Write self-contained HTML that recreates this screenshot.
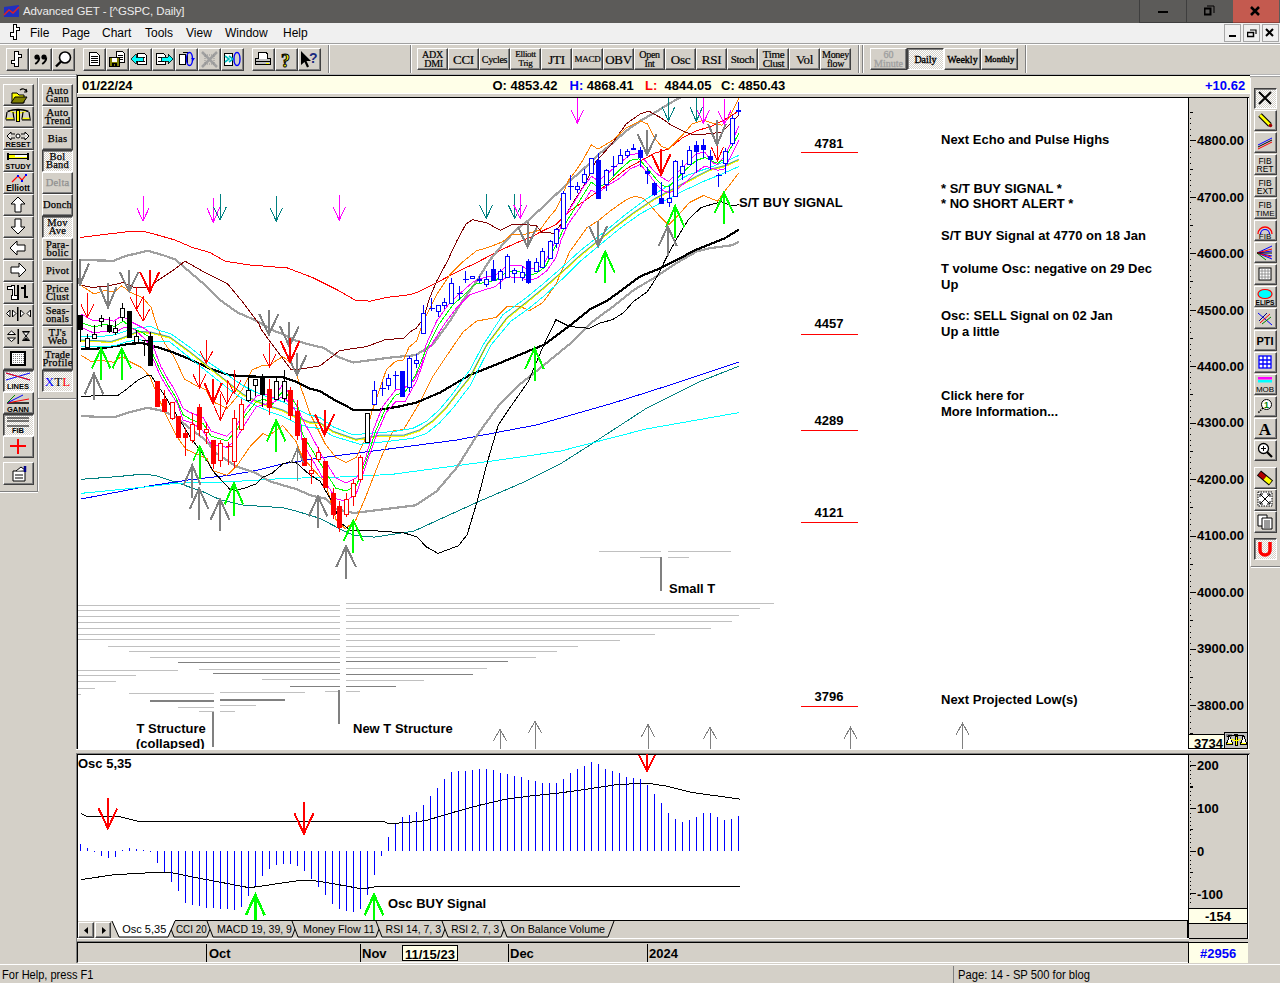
<!DOCTYPE html><html><head><meta charset="utf-8"><style>
*{margin:0;padding:0;box-sizing:border-box}
html,body{width:1280px;height:983px;overflow:hidden;background:#d4d0c8;font-family:"Liberation Sans",sans-serif;position:relative}
.a{position:absolute}
.btn{position:absolute;background:#d4d0c8;border-top:1px solid #fff;border-left:1px solid #fff;border-right:1px solid #404040;border-bottom:1px solid #404040;box-shadow:inset -1px -1px 0 #808080;overflow:hidden}
.pressed{background-color:#e8e6e2;background-image:repeating-conic-gradient(#ffffff 0 25%,#d4d0c8 0 50%);background-size:2px 2px;border-top:1px solid #404040;border-left:1px solid #404040;border-right:1px solid #fff;border-bottom:1px solid #fff;box-shadow:inset 1px 1px 0 #808080}
.tb{font-family:"Liberation Serif",serif;font-size:10px;line-height:9px;text-align:center;color:#000;width:100%;height:100%;display:flex;align-items:center;justify-content:center;letter-spacing:-0.3px}
svg{position:absolute;left:0;top:0}
</style></head><body><div class="a" style="left:0px;top:0px;width:1280px;height:23px;background:#5c5b59;"></div>
<svg width="20" height="20" style="left:2px;top:2px" viewBox="0 0 20 20"><polygon points="2,5 17,3 17,15 2,15" fill="#2030c0"/><polyline points="2,13 7,8 11,11 17,5" stroke="#e02020" stroke-width="1.5" fill="none"/></svg>
<div class="a" style="left:23px;top:6px;font-size:11.5px;color:#ececec;font-weight:normal;font-family:'Liberation Sans',sans-serif;white-space:nowrap;line-height:1;letter-spacing:-0.1px">Advanced GET - [^GSPC, Daily]</div>
<div class="a" style="left:1139px;top:0px;width:1px;height:22px;background:#3e3e3e;"></div>
<div class="a" style="left:1186px;top:0px;width:1px;height:22px;background:#3e3e3e;"></div>
<div class="a" style="left:1139px;top:22px;width:94px;height:1px;background:#3e3e3e;"></div>
<div class="a" style="left:1233px;top:0px;width:46px;height:22px;background:#c45a4f;"></div>
<div class="a" style="left:1233px;top:22px;width:46px;height:1px;background:#8e4039;"></div>
<div class="a" style="left:1158px;top:11px;width:10px;height:2px;background:#000;"></div>
<svg width="12" height="12" style="left:1204px;top:5px"><rect x="0.5" y="3.5" width="6" height="6" fill="none" stroke="#000" stroke-width="2"/><polyline points="3,1 10,1 10,8" fill="none" stroke="#000" stroke-width="1"/></svg>
<svg width="12" height="12" style="left:1250px;top:6px"><path d="M1,1 L9,9 M9,1 L1,9" stroke="#000" stroke-width="2.5"/></svg>
<div class="a" style="left:0px;top:23px;width:1280px;height:20px;background:#f0f0f0;"></div>
<svg width="14" height="18" style="left:9px;top:24px" shape-rendering="crispEdges"><path d="M4.5,0.5 h3 v3 h3 v3 h-3 v9 h-3 v-3 h-3 v-4 h3 z" fill="#fff" stroke="#000" stroke-width="1"/></svg>
<div class="a" style="left:30px;top:27px;font-size:12px;color:#000;font-weight:normal;font-family:'Liberation Sans',sans-serif;white-space:nowrap;line-height:1;">File</div>
<div class="a" style="left:62px;top:27px;font-size:12px;color:#000;font-weight:normal;font-family:'Liberation Sans',sans-serif;white-space:nowrap;line-height:1;">Page</div>
<div class="a" style="left:102px;top:27px;font-size:12px;color:#000;font-weight:normal;font-family:'Liberation Sans',sans-serif;white-space:nowrap;line-height:1;">Chart</div>
<div class="a" style="left:145px;top:27px;font-size:12px;color:#000;font-weight:normal;font-family:'Liberation Sans',sans-serif;white-space:nowrap;line-height:1;">Tools</div>
<div class="a" style="left:186px;top:27px;font-size:12px;color:#000;font-weight:normal;font-family:'Liberation Sans',sans-serif;white-space:nowrap;line-height:1;">View</div>
<div class="a" style="left:225px;top:27px;font-size:12px;color:#000;font-weight:normal;font-family:'Liberation Sans',sans-serif;white-space:nowrap;line-height:1;">Window</div>
<div class="a" style="left:283px;top:27px;font-size:12px;color:#000;font-weight:normal;font-family:'Liberation Sans',sans-serif;white-space:nowrap;line-height:1;">Help</div>
<div class="a" style="left:1224px;top:24px;width:17px;height:18px;background:#f0f0f0;border:1px solid #a8a8a8"></div>
<div class="a" style="left:1243px;top:24px;width:17px;height:18px;background:#f0f0f0;border:1px solid #a8a8a8"></div>
<div class="a" style="left:1262px;top:24px;width:17px;height:18px;background:#f0f0f0;border:1px solid #a8a8a8"></div>
<div class="a" style="left:1229px;top:35px;width:7px;height:2px;background:#000;"></div>
<svg width="10" height="10" style="left:1247px;top:28px"><rect x="0.5" y="4.5" width="6" height="4" fill="none" stroke="#000" stroke-width="1.5"/><polyline points="3,2 9,2 9,6" fill="none" stroke="#000" stroke-width="1.2"/></svg>
<svg width="10" height="10" style="left:1265px;top:28px"><path d="M1,1 L8,8 M8,1 L1,8" stroke="#000" stroke-width="2"/></svg>
<div class="a" style="left:0px;top:43px;width:1280px;height:1px;background:#a0a0a0;"></div>
<div class="a" style="left:0px;top:44px;width:1280px;height:1px;background:#ffffff;"></div>
<div class="a" style="left:328px;top:45px;width:1px;height:28px;background:#808080;"></div>
<div class="a" style="left:329px;top:45px;width:1px;height:28px;background:#ffffff;"></div>
<div class="a" style="left:410px;top:45px;width:1px;height:28px;background:#808080;"></div>
<div class="a" style="left:411px;top:45px;width:1px;height:28px;background:#ffffff;"></div>
<div class="a" style="left:858px;top:45px;width:1px;height:28px;background:#808080;"></div>
<div class="a" style="left:859px;top:45px;width:1px;height:28px;background:#ffffff;"></div>
<div class="a" style="left:862px;top:45px;width:1px;height:28px;background:#808080;"></div>
<div class="a" style="left:863px;top:45px;width:1px;height:28px;background:#ffffff;"></div>
<div class="a" style="left:1025px;top:45px;width:1px;height:28px;background:#808080;"></div>
<div class="a" style="left:1026px;top:45px;width:1px;height:28px;background:#ffffff;"></div>
<div class="btn" style="left:6px;top:48px;width:23px;height:23px;"><div style="position:absolute;left:-1px;top:-1px"><svg width="23" height="23" shape-rendering="crispEdges"><path d="M8.5,3.5 h4 v3 h3 v3 h-3 v9 h-4 v-3 h-3 v-3 h3 z" fill="#fff" stroke="#000" stroke-width="1.5"/></svg></div></div>
<div class="btn" style="left:29px;top:48px;width:23px;height:23px;"><div style="position:absolute;left:-1px;top:-1px"><svg width="23" height="23"><circle cx="8" cy="9" r="2.6" fill="#000"/><circle cx="15" cy="9" r="2.6" fill="#000"/><path d="M10.2,9.5 q0,4 -4,6.5 M17.2,9.5 q0,4 -4,6.5" stroke="#000" stroke-width="2" fill="none"/></svg></div></div>
<div class="btn" style="left:52px;top:48px;width:23px;height:23px;"><div style="position:absolute;left:-1px;top:-1px"><svg width="23" height="23"><circle cx="13" cy="9.5" r="5.5" fill="#fff" stroke="#000" stroke-width="1.6"/><path d="M9,13.5 L4,18.5" stroke="#000" stroke-width="2.4"/></svg></div></div>
<div class="btn" style="left:83px;top:48px;width:23px;height:23px;"><div style="position:absolute;left:-1px;top:-1px"><svg width="23" height="23" shape-rendering="crispEdges"><path d="M6.5,4.5 h7 l3,3 v10 h-10 z" fill="#fff" stroke="#000"/><rect x="8" y="8" width="7" height="1" fill="#000"/><rect x="8" y="10" width="7" height="1" fill="#000"/><rect x="8" y="12" width="7" height="1" fill="#000"/><rect x="8" y="14" width="7" height="1" fill="#000"/></svg></div></div>
<div class="btn" style="left:106px;top:48px;width:23px;height:23px;"><div style="position:absolute;left:-1px;top:-1px"><svg width="23" height="23" shape-rendering="crispEdges"><path d="M10.5,3.5 h6 l2,2 v9 h-8 z" fill="#fff" stroke="#000"/><rect x="12" y="7" width="5" height="1" fill="#000"/><rect x="12" y="9" width="5" height="1" fill="#000"/><rect x="12" y="11" width="5" height="1" fill="#000"/><rect x="3.5" y="9.5" width="10" height="9" fill="#808000" stroke="#000"/><rect x="6" y="10" width="5" height="4" fill="#fff"/><rect x="6" y="15" width="5" height="3" fill="#000"/><rect x="8" y="16" width="1" height="2" fill="#808000"/></svg></div></div>
<div class="btn" style="left:129px;top:48px;width:23px;height:23px;"><div style="position:absolute;left:-1px;top:-1px"><svg width="23" height="23" shape-rendering="crispEdges"><path d="M8.5,5.5 h7 l2,2 v9 h-9 z" fill="#fff" stroke="#000"/><rect x="10" y="9" width="6" height="1" fill="#000"/><rect x="10" y="13" width="6" height="1" fill="#000"/><polygon points="2,11 7,6 7,9 14,9 14,13 7,13 7,16" fill="#00ffff" stroke="#000" stroke-width="0.8"/></svg></div></div>
<div class="btn" style="left:152px;top:48px;width:23px;height:23px;"><div style="position:absolute;left:-1px;top:-1px"><svg width="23" height="23" shape-rendering="crispEdges"><path d="M4.5,5.5 h7 l2,2 v9 h-9 z" fill="#fff" stroke="#000"/><rect x="6" y="9" width="6" height="1" fill="#000"/><rect x="6" y="13" width="6" height="1" fill="#000"/><polygon points="21,11 16,6 16,9 9,9 9,13 16,13 16,16" fill="#00ffff" stroke="#000" stroke-width="0.8"/></svg></div></div>
<div class="btn" style="left:175px;top:48px;width:23px;height:23px;"><div style="position:absolute;left:-1px;top:-1px"><svg width="23" height="23"><path d="M4.5,6.5 h6 v10 h-6 z" fill="#fff" stroke="#000" shape-rendering="crispEdges"/><path d="M7.5,4.5 h5 v10" fill="none" stroke="#000" shape-rendering="crispEdges"/><ellipse cx="14.5" cy="11" rx="3" ry="6.5" fill="none" stroke="#0000ff" stroke-width="1.4"/><polygon points="16,10 20,10 18,13" fill="#0000ff"/></svg></div></div>
<div class="btn" style="left:198px;top:48px;width:23px;height:23px;"><div style="position:absolute;left:-1px;top:-1px"><svg width="23" height="23"><path d="M4,4 L19,19 M19,4 L4,19" stroke="#a0a0a0" stroke-width="2.5"/><rect x="7" y="7" width="9" height="9" fill="none" stroke="#909090" stroke-dasharray="1,1"/></svg></div></div>
<div class="btn" style="left:221px;top:48px;width:23px;height:23px;"><div style="position:absolute;left:-1px;top:-1px"><svg width="23" height="23"><path d="M3.5,5.5 h8 v12 h-8 z" fill="#fff" stroke="#000" shape-rendering="crispEdges"/><path d="M4,8 l4,3 l-4,3 M8,8 l4,3 l-4,3" stroke="#00c0c0" stroke-width="1.6" fill="none"/><ellipse cx="16" cy="11" rx="3" ry="6.5" fill="none" stroke="#0000ff" stroke-width="1.4"/></svg></div></div>
<div class="btn" style="left:252px;top:48px;width:23px;height:23px;"><div style="position:absolute;left:-1px;top:-1px"><svg width="23" height="23" shape-rendering="crispEdges"><rect x="3.5" y="10.5" width="15" height="6" fill="#c0c0c0" stroke="#000"/><path d="M6.5,10.5 v-6 h8 l1,2 v4" fill="#fff" stroke="#000"/><rect x="4" y="13" width="14" height="1" fill="#000"/><rect x="14" y="15" width="3" height="1" fill="#ffff00"/></svg></div></div>
<div class="btn" style="left:275px;top:48px;width:23px;height:23px;"><div style="position:absolute;left:-1px;top:-1px"><svg width="23" height="23"><text x="6" y="19" font-family="Liberation Serif" font-weight="bold" font-size="18" fill="#ffff00" stroke="#000" stroke-width="1">?</text></svg></div></div>
<div class="btn" style="left:298px;top:48px;width:23px;height:23px;"><div style="position:absolute;left:-1px;top:-1px"><svg width="23" height="23"><polygon points="3,3 3,17 6.5,14 9,19.5 11,18.5 8.5,13 13,13" fill="#000"/><text x="11" y="15" font-family="Liberation Sans" font-weight="bold" font-size="14" fill="#1a2a80">?</text></svg></div></div>
<div class="btn" style="left:417px;top:48px;width:31px;height:22px;"><div class="tb" style="font-size:10px;-webkit-text-stroke:0.2px #000">ADX<br>&nbsp;DMI</div></div>
<div class="btn" style="left:448px;top:48px;width:31px;height:22px;"><div class="tb" style="font-size:13px;-webkit-text-stroke:0.2px #000">CCI</div></div>
<div class="btn" style="left:479px;top:48px;width:31px;height:22px;"><div class="tb" style="font-size:10px;-webkit-text-stroke:0.2px #000">Cycles</div></div>
<div class="btn" style="left:510px;top:48px;width:31px;height:22px;"><div class="tb" style="font-size:9px;-webkit-text-stroke:0.2px #000">Elliott<br>Trig</div></div>
<div class="btn" style="left:541px;top:48px;width:31px;height:22px;"><div class="tb" style="font-size:13px;-webkit-text-stroke:0.2px #000">JTI</div></div>
<div class="btn" style="left:572px;top:48px;width:31px;height:22px;"><div class="tb" style="font-size:9px;-webkit-text-stroke:0.2px #000">MACD</div></div>
<div class="btn" style="left:603px;top:48px;width:31px;height:22px;"><div class="tb" style="font-size:13px;-webkit-text-stroke:0.2px #000">OBV</div></div>
<div class="btn" style="left:634px;top:48px;width:31px;height:22px;"><div class="tb" style="font-size:10px;-webkit-text-stroke:0.2px #000">Open<br>Int</div></div>
<div class="btn" style="left:665px;top:48px;width:31px;height:22px;"><div class="tb" style="font-size:13px;-webkit-text-stroke:0.2px #000">Osc</div></div>
<div class="btn" style="left:696px;top:48px;width:31px;height:22px;"><div class="tb" style="font-size:13px;-webkit-text-stroke:0.2px #000">RSI</div></div>
<div class="btn" style="left:727px;top:48px;width:31px;height:22px;"><div class="tb" style="font-size:11px;-webkit-text-stroke:0.2px #000">Stoch</div></div>
<div class="btn" style="left:758px;top:48px;width:31px;height:22px;"><div class="tb" style="font-size:11px;-webkit-text-stroke:0.2px #000">Time<br>Clust</div></div>
<div class="btn" style="left:789px;top:48px;width:31px;height:22px;"><div class="tb" style="font-size:13px;-webkit-text-stroke:0.2px #000">Vol</div></div>
<div class="btn" style="left:820px;top:48px;width:31px;height:22px;"><div class="tb" style="font-size:10px;-webkit-text-stroke:0.2px #000">Money<br>flow</div></div>
<div class="btn" style="left:870px;top:48px;width:37px;height:22px;"><div class="tb" style="font-size:10px;color:#a0a0a0;font-weight:normal;-webkit-text-stroke:0.35px #a0a0a0;letter-spacing:0">60<br>Minute</div></div>
<div class="btn pressed" style="left:907px;top:48px;width:37px;height:22px;"><div class="tb" style="font-size:10px;color:#000;font-weight:normal;-webkit-text-stroke:0.35px #000;letter-spacing:0">Daily</div></div>
<div class="btn" style="left:944px;top:48px;width:37px;height:22px;"><div class="tb" style="font-size:10px;color:#000;font-weight:normal;-webkit-text-stroke:0.35px #000;letter-spacing:0">Weekly</div></div>
<div class="btn" style="left:981px;top:48px;width:37px;height:22px;"><div class="tb" style="font-size:8.6px;color:#000;font-weight:normal;-webkit-text-stroke:0.35px #000;letter-spacing:0">Monthly</div></div>
<div class="a" style="left:0px;top:74px;width:1280px;height:1px;background:#b4b4b4;"></div>
<div class="a" style="left:0px;top:75px;width:1280px;height:1px;background:#ffffff;"></div>
<div class="a" style="left:0px;top:76px;width:1280px;height:1px;background:#a0a0a0;"></div>
<div class="a" style="left:0px;top:77px;width:77px;height:1px;background:#ffffff;"></div>
<div class="a" style="left:37px;top:78px;width:1px;height:413px;background:#808080;"></div>
<div class="a" style="left:38px;top:78px;width:1px;height:413px;background:#ffffff;"></div>
<div class="a" style="left:0px;top:491px;width:38px;height:1px;background:#808080;"></div>
<div class="a" style="left:0px;top:492px;width:38px;height:1px;background:#ffffff;"></div>
<div class="a" style="left:38px;top:398px;width:39px;height:1px;background:#808080;"></div>
<div class="a" style="left:38px;top:399px;width:39px;height:1px;background:#ffffff;"></div>
<div class="a" style="left:76px;top:78px;width:1px;height:320px;background:#808080;"></div>
<div class="btn" style="left:3px;top:84px;width:31px;height:22px;"><div style="position:absolute;left:-1px;top:-1px"><svg width="30" height="21"><path d="M9,9 h5 l2,2 h5 v8 h-12 z" fill="#ffff00" stroke="#000" stroke-width="1"/><path d="M8,19 l4,-6 h12 l-4,6 z" fill="#808000" stroke="#000" stroke-width="1"/><path d="M17,6 q4,-3 7,2 l-1,-3 m1,3 l-3,0" fill="none" stroke="#000" stroke-width="1.2"/></svg></div></div>
<div class="btn" style="left:3px;top:106px;width:31px;height:22px;"><div style="position:absolute;left:-1px;top:-1px"><svg width="30" height="21"><path d="M4.5,5.5 q10.5,-4 21,0" fill="none" stroke="#000" stroke-width="1.6"/><path d="M7.5,5.5 q7,3 15,0" fill="none" stroke="#ffff00" stroke-width="1.2"/><rect x="13" y="3" width="4" height="13" fill="#000"/><rect x="14" y="5" width="2" height="10" fill="#ffff00"/><path d="M4,6 l-1,7 h8 l-1,-7" fill="none" stroke="#000" stroke-width="1.2"/><path d="M20,6 l-1,7 h8 l-1,-7" fill="none" stroke="#000" stroke-width="1.2"/><path d="M3.5,12.5 h7 M19.5,12.5 h7" stroke="#ffff00" stroke-width="1.6"/><path d="M3,14 h9 M19,14 h9" stroke="#000" stroke-width="1"/></svg></div></div>
<div class="btn" style="left:3px;top:128px;width:31px;height:22px;"><div style="position:absolute;left:-1px;top:-1px"><svg width="30" height="21"><path d="M4,8 l4,-4 v2 h4 M4,8 l4,4 v-2 h4 M26,8 l-4,-4 v2 h-4 M26,8 l-4,4 v-2 h-4" fill="#fff" stroke="#000" stroke-width="1"/><circle cx="15" cy="8" r="2" fill="#fff" stroke="#000"/><text x="15" y="19" text-anchor="middle" font-family="Liberation Sans" font-weight="bold" font-size="7.5" fill="#000">RESET</text></svg></div></div>
<div class="btn" style="left:3px;top:150px;width:31px;height:22px;"><div style="position:absolute;left:-1px;top:-1px"><svg width="30" height="21" shape-rendering="crispEdges"><rect x="5.5" y="4.5" width="19" height="4" fill="#ffff00" stroke="#000"/><rect x="12" y="5" width="12" height="2" fill="#fff"/><rect x="4" y="3" width="2" height="7" fill="#000"/><rect x="24" y="3" width="2" height="7" fill="#000"/><text x="15" y="19" text-anchor="middle" font-family="Liberation Sans" font-weight="bold" font-size="7.5" fill="#000">STUDY</text></svg></div></div>
<div class="btn" style="left:3px;top:172px;width:31px;height:22px;"><div style="position:absolute;left:-1px;top:-1px"><svg width="30" height="21"><polyline points="9,10 15,4 19,8 23,3" fill="none" stroke="#f00" stroke-width="1.2"/><rect x="14" y="3" width="2" height="2" fill="#00f"/><rect x="18" y="8" width="2" height="2" fill="#00f"/><rect x="22" y="2" width="2" height="2" fill="#00f"/><text x="15" y="19" text-anchor="middle" font-family="Liberation Sans" font-weight="bold" font-size="8.5" fill="#000">Elliott</text></svg></div></div>
<div class="btn" style="left:3px;top:194px;width:31px;height:22px;"><div style="position:absolute;left:-1px;top:-1px"><svg width="30" height="21"><polygon points="15,3 22,10 18,10 18,18 12,18 12,10 8,10" fill="#fff" stroke="#000"/></svg></div></div>
<div class="btn" style="left:3px;top:216px;width:31px;height:22px;"><div style="position:absolute;left:-1px;top:-1px"><svg width="30" height="21"><polygon points="15,18 22,11 18,11 18,3 12,3 12,11 8,11" fill="#fff" stroke="#000"/></svg></div></div>
<div class="btn" style="left:3px;top:238px;width:31px;height:22px;"><div style="position:absolute;left:-1px;top:-1px"><svg width="30" height="21"><polygon points="7,10 14,3 14,7 22,7 22,13 14,13 14,17" fill="#fff" stroke="#000"/></svg></div></div>
<div class="btn" style="left:3px;top:260px;width:31px;height:22px;"><div style="position:absolute;left:-1px;top:-1px"><svg width="30" height="21"><polygon points="23,10 16,3 16,7 8,7 8,13 16,13 16,17" fill="#fff" stroke="#000"/></svg></div></div>
<div class="btn" style="left:3px;top:282px;width:31px;height:22px;"><div style="position:absolute;left:-1px;top:-1px"><svg width="30" height="21" shape-rendering="crispEdges"><path d="M4.5,4.5 h4 v-1 h3 v10 h3 v4 h-6 v-4 h1 v-6 h-5 z" fill="#fff" stroke="#000" stroke-width="1.5"/><rect x="14" y="3" width="1.5" height="15" fill="#000"/><rect x="18" y="5" width="4" height="1.5" fill="#000"/><rect x="21" y="3" width="1.5" height="13" fill="#000"/><rect x="21" y="14" width="4" height="1.5" fill="#000"/></svg></div></div>
<div class="btn" style="left:3px;top:304px;width:31px;height:22px;"><div style="position:absolute;left:-1px;top:-1px"><svg width="30" height="21"><path d="M3.5,9.5 l3.5,-3.5 v7 z M9.5,6 v7 l3.5,-3.5 z M17.5,6 v7 l3.5,-3.5 z M27.5,6 v7 l-3.5,-3.5 z" fill="#fff" stroke="#000" stroke-width="1"/><rect x="14" y="3" width="1.5" height="14" fill="#000"/></svg></div></div>
<div class="btn" style="left:3px;top:326px;width:31px;height:22px;"><div style="position:absolute;left:-1px;top:-1px"><svg width="30" height="21"><path d="M4.5,8.5 l4,-3.5 l4,3.5 z M4.5,12 l4,3.5 l4,-3.5 z" fill="#fff" stroke="#000" stroke-width="1"/><rect x="14.5" y="3" width="1.5" height="15" fill="#000"/><path d="M19.5,5.5 h7 l-3.5,4.5 l3.5,4.5 h-7 l3.5,-4.5 z" fill="#fff" stroke="#000" stroke-width="1"/><path d="M20.5,14 h5 l-2.5,-2.5 z" fill="#000"/><path d="M20.5,6 h5" stroke="#000" stroke-width="1.2"/></svg></div></div>
<div class="btn" style="left:3px;top:348px;width:31px;height:22px;"><div style="position:absolute;left:-1px;top:-1px"><svg width="30" height="21" shape-rendering="crispEdges"><defs><pattern id="dots" width="2" height="2" patternUnits="userSpaceOnUse"><rect width="2" height="2" fill="#fff"/><rect width="1" height="1" fill="#808080"/></pattern></defs><rect x="8" y="4" width="14" height="13" fill="url(#dots)" stroke="#000" stroke-width="2"/></svg></div></div>
<div class="btn pressed" style="left:3px;top:370px;width:31px;height:22px;"><div style="position:absolute;left:-1px;top:-1px"><svg width="30" height="21"><path d="M3,3 L27,10 M3,10 L27,3" stroke="#00f" stroke-width="1"/><path d="M3,3 L27,10" stroke="#f00" stroke-width="1"/><text x="15" y="19" text-anchor="middle" font-family="Liberation Sans" font-weight="bold" font-size="7.5" fill="#000">LINES</text></svg></div></div>
<div class="btn" style="left:3px;top:392px;width:31px;height:22px;"><div style="position:absolute;left:-1px;top:-1px"><svg width="30" height="21"><path d="M4,11 h22" stroke="#000" stroke-width="1.5"/><path d="M4,11 L26,7" stroke="#f00"/><path d="M4,11 L20,3" stroke="#00f"/><path d="M4,11 L12,3" stroke="#080"/><text x="15" y="20" text-anchor="middle" font-family="Liberation Sans" font-weight="bold" font-size="7.5" fill="#000">GANN</text></svg></div></div>
<div class="btn pressed" style="left:3px;top:414px;width:31px;height:22px;"><div style="position:absolute;left:-1px;top:-1px"><svg width="30" height="21"><path d="M4,4 h22 M4,7 h22 M4,12 h22" stroke="#000" stroke-width="1.2"/><text x="15" y="19" text-anchor="middle" font-family="Liberation Sans" font-weight="bold" font-size="7.5" fill="#000">FIB</text></svg></div></div>
<div class="btn" style="left:3px;top:436px;width:31px;height:22px;"><div style="position:absolute;left:-1px;top:-1px"><svg width="30" height="21"><path d="M15,3 v15 M7,10 h16" stroke="#f00" stroke-width="2"/></svg></div></div>
<div class="btn" style="left:3px;top:462px;width:31px;height:23px;"><div style="position:absolute;left:-1px;top:0px"><svg width="30" height="21"><path d="M10,8 h12 v10 h-12 z" fill="#fff" stroke="#000"/><path d="M12,12 h8 M12,15 h8" stroke="#000"/><path d="M13,8 l5,-4 l4,3" fill="#fff" stroke="#000"/><path d="M22,3 v6" stroke="#00008b" stroke-width="2.5"/></svg></div></div>
<div class="btn" style="left:42px;top:84px;width:31px;height:22px;"><div class="tb" style="font-size:10.5px;font-weight:normal;color:#000;line-height:8px;letter-spacing:0.2px;-webkit-text-stroke:0.25px #000">Auto<br>Gann</div></div>
<div class="btn" style="left:42px;top:106px;width:31px;height:22px;"><div class="tb" style="font-size:10.5px;font-weight:normal;color:#000;line-height:8px;letter-spacing:0.2px;-webkit-text-stroke:0.25px #000">Auto<br>Trend</div></div>
<div class="btn" style="left:42px;top:128px;width:31px;height:22px;"><div class="tb" style="font-size:10.5px;font-weight:normal;color:#000;line-height:8px;letter-spacing:0.2px;-webkit-text-stroke:0.25px #000">Bias</div></div>
<div class="btn pressed" style="left:42px;top:150px;width:31px;height:22px;"><div class="tb" style="font-size:10.5px;font-weight:normal;color:#000;line-height:8px;letter-spacing:0.2px;-webkit-text-stroke:0.25px #000">Bol<br>Band</div></div>
<div class="btn" style="left:42px;top:172px;width:31px;height:22px;"><div class="tb" style="font-size:10.5px;font-weight:normal;color:#909090;line-height:8px;letter-spacing:0.2px;-webkit-text-stroke:0.25px #909090">Delta</div></div>
<div class="btn" style="left:42px;top:194px;width:31px;height:22px;"><div class="tb" style="font-size:10.5px;font-weight:normal;color:#000;line-height:8px;letter-spacing:0.2px;-webkit-text-stroke:0.25px #000">Donch</div></div>
<div class="btn pressed" style="left:42px;top:216px;width:31px;height:22px;"><div class="tb" style="font-size:10.5px;font-weight:normal;color:#000;line-height:8px;letter-spacing:0.2px;-webkit-text-stroke:0.25px #000">Mov<br>Ave</div></div>
<div class="btn" style="left:42px;top:238px;width:31px;height:22px;"><div class="tb" style="font-size:10.5px;font-weight:normal;color:#000;line-height:8px;letter-spacing:0.2px;-webkit-text-stroke:0.25px #000">Para-<br>bolic</div></div>
<div class="btn" style="left:42px;top:260px;width:31px;height:22px;"><div class="tb" style="font-size:10.5px;font-weight:normal;color:#000;line-height:8px;letter-spacing:0.2px;-webkit-text-stroke:0.25px #000">Pivot</div></div>
<div class="btn" style="left:42px;top:282px;width:31px;height:22px;"><div class="tb" style="font-size:10.5px;font-weight:normal;color:#000;line-height:8px;letter-spacing:0.2px;-webkit-text-stroke:0.25px #000">Price<br>Clust</div></div>
<div class="btn" style="left:42px;top:304px;width:31px;height:22px;"><div class="tb" style="font-size:10.5px;font-weight:normal;color:#000;line-height:8px;letter-spacing:0.2px;-webkit-text-stroke:0.25px #000">Seas-<br>onals</div></div>
<div class="btn" style="left:42px;top:326px;width:31px;height:22px;"><div class="tb" style="font-size:10.5px;font-weight:normal;color:#000;line-height:8px;letter-spacing:0.2px;-webkit-text-stroke:0.25px #000">TJ's<br>Web</div></div>
<div class="btn" style="left:42px;top:348px;width:31px;height:22px;"><div class="tb" style="font-size:10.5px;font-weight:normal;color:#000;line-height:8px;letter-spacing:0.2px;-webkit-text-stroke:0.25px #000">Trade<br>Profile</div></div>
<div class="btn pressed" style="left:42px;top:370px;width:31px;height:22px;"><div class="tb" style="font-size:13px;letter-spacing:0"><span style="color:#00f">X</span><span>T</span><span style="color:#f00">L</span></div></div>
<div class="a" style="left:77px;top:75px;width:1173px;height:18px;background:#ffffe8;border-top:1px solid #000;border-left:1px solid #000"></div>
<div class="a" style="left:77px;top:93px;width:1173px;height:1px;background:#ffffff;"></div>
<div class="a" style="left:82px;top:79px;font-size:13px;color:#000;font-weight:bold;font-family:'Liberation Sans',sans-serif;white-space:nowrap;line-height:1;">01/22/24</div>
<div class="a" style="left:492.5px;top:79px;font-size:13px;color:#000;font-weight:bold;font-family:'Liberation Sans',sans-serif;white-space:nowrap;line-height:1;">O: 4853.42</div>
<div class="a" style="left:569.5px;top:79px;font-size:13px;color:#000;font-weight:bold;font-family:'Liberation Sans',sans-serif;white-space:nowrap;line-height:1;"><span style="color:#00f">H:</span> 4868.41</div>
<div class="a" style="left:645px;top:79px;font-size:13px;color:#000;font-weight:bold;font-family:'Liberation Sans',sans-serif;white-space:nowrap;line-height:1;"><span style="color:#f00">L:</span>&nbsp; 4844.05</div>
<div class="a" style="left:721px;top:79px;font-size:13px;color:#000;font-weight:bold;font-family:'Liberation Sans',sans-serif;white-space:nowrap;line-height:1;">C: 4850.43</div>
<div class="a" style="left:1205px;top:79px;font-size:13px;color:#0000ff;font-weight:bold;font-family:'Liberation Sans',sans-serif;white-space:nowrap;line-height:1;">+10.62</div>
<div class="a" style="left:77px;top:97px;width:1172px;height:653px;background:#ffffff;border-top:1px solid #000;border-left:1px solid #000"></div>
<div class="a" style="left:1188px;top:98px;width:60px;height:651px;background:#d4d0c8;border-left:1px solid #000;border-right:1px solid #000"></div>
<div class="a" style="left:77px;top:749px;width:1173px;height:1px;background:#ffffff;"></div>
<div class="a" style="left:77px;top:750px;width:1173px;height:4px;background:#d4d0c8;"></div>
<div class="a" style="left:76px;top:753px;width:1174px;height:1px;background:#808080;"></div>
<div class="a" style="left:77px;top:754px;width:1172px;height:185px;background:#ffffff;border-top:1px solid #000;border-left:1px solid #000"></div>
<div class="a" style="left:1188px;top:755px;width:60px;height:153px;background:#d4d0c8;border-left:1px solid #000;border-right:1px solid #000"></div>
<div class="a" style="left:1188px;top:908px;width:60px;height:16px;background:#ffffe8;border:1px solid #000"></div>
<div class="a" style="left:1188px;top:924px;width:60px;height:15px;background:#d4d0c8;border-left:1px solid #000;border-right:1px solid #000;border-bottom:1px solid #000"></div>
<div class="a" style="left:78px;top:921px;width:1110px;height:17px;background:#d4d0c8;border-right:1px solid #000"></div>
<div class="a" style="left:175px;top:920px;width:1013px;height:1px;background:#000000;"></div>
<div class="a" style="left:77px;top:938px;width:1112px;height:1px;background:#ffffff;"></div>
<div class="btn" style="left:78px;top:922px;width:16px;height:16px;"><svg width="14" height="14" style="left:0;top:0"><polygon points="9,4 9,11 5,7.5" fill="#000"/></svg></div>
<div class="btn" style="left:95px;top:922px;width:16px;height:16px;"><svg width="14" height="14" style="left:0;top:0"><polygon points="6,4 6,11 10,7.5" fill="#000"/></svg></div>
<svg width="1280" height="983" style="left:0;top:0"><polygon points="168,921 213,921 207,937 174,937" fill="#d4d0c8"/><polyline points="168,921 174,937 207,937 213,921" fill="none" stroke="#000" stroke-width="1"/><text x="176" y="933" font-family="Liberation Sans" font-size="11.5" fill="#000" textLength="30.6" lengthAdjust="spacingAndGlyphs">CCI 20</text><polygon points="207,921 298,921 292,937 213,937" fill="#d4d0c8"/><polyline points="207,921 213,937 292,937 298,921" fill="none" stroke="#000" stroke-width="1"/><text x="217" y="933" font-family="Liberation Sans" font-size="11.5" fill="#000" textLength="75" lengthAdjust="spacingAndGlyphs">MACD 19, 39, 9</text><polygon points="292,921 382,921 376,937 298,937" fill="#d4d0c8"/><polyline points="292,921 298,937 376,937 382,921" fill="none" stroke="#000" stroke-width="1"/><text x="303" y="933" font-family="Liberation Sans" font-size="11.5" fill="#000" textLength="71.7" lengthAdjust="spacingAndGlyphs">Money Flow 11</text><polygon points="376,921 448,921 442,937 382,937" fill="#d4d0c8"/><polyline points="376,921 382,937 442,937 448,921" fill="none" stroke="#000" stroke-width="1"/><text x="385.6" y="933" font-family="Liberation Sans" font-size="11.5" fill="#000" textLength="55.4" lengthAdjust="spacingAndGlyphs">RSI 14, 7, 3</text><polygon points="442,921 507,921 501,937 448,937" fill="#d4d0c8"/><polyline points="442,921 448,937 501,937 507,921" fill="none" stroke="#000" stroke-width="1"/><text x="451.2" y="933" font-family="Liberation Sans" font-size="11.5" fill="#000" textLength="48" lengthAdjust="spacingAndGlyphs">RSI 2, 7, 3</text><polygon points="501,921 614,921 608,937 507,937" fill="#d4d0c8"/><polyline points="501,921 507,937 608,937 614,921" fill="none" stroke="#000" stroke-width="1"/><text x="510.5" y="933" font-family="Liberation Sans" font-size="11.5" fill="#000" textLength="94.5" lengthAdjust="spacingAndGlyphs">On Balance Volume</text><polygon points="112,920 175,920 168,937 119,937" fill="#fff"/><polyline points="112,921 119,937 168,937 175,921" fill="none" stroke="#000" stroke-width="1"/><text x="122.25" y="933" font-family="Liberation Sans" font-size="11.5" fill="#000" textLength="44" lengthAdjust="spacingAndGlyphs">Osc 5,35</text></svg>
<div class="a" style="left:76px;top:941px;width:1113px;height:1px;background:#808080;"></div>
<div class="a" style="left:77px;top:942px;width:1112px;height:21px;background:#d4d0c8;border-top:1px solid #000;border-left:1px solid #000;border-bottom:1px solid #fff"></div>
<div class="a" style="left:1188px;top:942px;width:60px;height:21px;background:#ffffe8;border-top:1px solid #000;border-left:1px solid #000"></div>
<div class="a" style="left:1200px;top:947px;font-size:13px;color:#0000ff;font-weight:bold;font-family:'Liberation Sans',sans-serif;white-space:nowrap;line-height:1;">#2956</div>
<div class="a" style="left:206px;top:944px;width:1px;height:18px;background:#000;"></div>
<div class="a" style="left:360px;top:944px;width:1px;height:18px;background:#000;"></div>
<div class="a" style="left:508px;top:944px;width:1px;height:18px;background:#000;"></div>
<div class="a" style="left:647px;top:944px;width:1px;height:18px;background:#000;"></div>
<div class="a" style="left:209px;top:947px;font-size:13px;color:#000;font-weight:bold;font-family:'Liberation Sans',sans-serif;white-space:nowrap;line-height:1;">Oct</div>
<div class="a" style="left:362px;top:947px;font-size:13px;color:#000;font-weight:bold;font-family:'Liberation Sans',sans-serif;white-space:nowrap;line-height:1;">Nov</div>
<div class="a" style="left:402px;top:945px;width:56px;height:16px;background:#ffffe8;border:1px solid #000"></div>
<div class="a" style="left:405px;top:948px;font-size:13px;color:#000;font-weight:bold;font-family:'Liberation Sans',sans-serif;white-space:nowrap;line-height:1;">11/15/23</div>
<div class="a" style="left:510px;top:947px;font-size:13px;color:#000;font-weight:bold;font-family:'Liberation Sans',sans-serif;white-space:nowrap;line-height:1;">Dec</div>
<div class="a" style="left:649px;top:947px;font-size:13px;color:#000;font-weight:bold;font-family:'Liberation Sans',sans-serif;white-space:nowrap;line-height:1;">2024</div>
<div class="a" style="left:76px;top:74px;width:1px;height:675px;background:#808080;"></div>
<div class="a" style="left:76px;top:753px;width:1px;height:210px;background:#808080;"></div>
<div class="a" style="left:76px;top:749px;width:1174px;height:1px;background:#ffffff;"></div>
<div class="a" style="left:0px;top:964px;width:1280px;height:19px;background:#d4d0c8;border-top:1px solid #fff"></div>
<div class="a" style="left:2px;top:969px;font-size:12px;color:#000;font-weight:normal;font-family:'Liberation Sans',sans-serif;white-space:nowrap;line-height:1;transform:scaleX(0.92);transform-origin:0 0">For Help, press F1</div>
<div class="a" style="left:953px;top:966px;width:327px;height:17px;background:#d4d0c8;border-left:1px solid #808080"></div>
<div class="a" style="left:958px;top:969px;font-size:12px;color:#000;font-weight:normal;font-family:'Liberation Sans',sans-serif;white-space:nowrap;line-height:1;transform:scaleX(0.935);transform-origin:0 0">Page: 14 - SP 500 for blog</div>
<svg width="1280" height="983" style="left:0;top:0" shape-rendering="crispEdges"><defs><clipPath id="cm"><rect x="78" y="98" width="1110" height="651"/></clipPath><clipPath id="co"><rect x="78" y="755" width="1110" height="165"/></clipPath></defs><g shape-rendering="crispEdges">
<rect x="1190" y="733" width="3" height="1" fill="#000"/>
<rect x="1190" y="728" width="1" height="1" fill="#000"/>
<rect x="1190" y="722" width="1" height="1" fill="#000"/>
<rect x="1190" y="716" width="1" height="1" fill="#000"/>
<rect x="1190" y="711" width="1" height="1" fill="#000"/>
<rect x="1190" y="704.5" width="6" height="1.2" fill="#000"/>
<rect x="1190" y="699" width="1" height="1" fill="#000"/>
<rect x="1190" y="694" width="1" height="1" fill="#000"/>
<rect x="1190" y="688" width="1" height="1" fill="#000"/>
<rect x="1190" y="682" width="1" height="1" fill="#000"/>
<rect x="1190" y="677" width="3" height="1" fill="#000"/>
<rect x="1190" y="671" width="1" height="1" fill="#000"/>
<rect x="1190" y="665" width="1" height="1" fill="#000"/>
<rect x="1190" y="660" width="1" height="1" fill="#000"/>
<rect x="1190" y="654" width="1" height="1" fill="#000"/>
<rect x="1190" y="648.5" width="6" height="1.2" fill="#000"/>
<rect x="1190" y="643" width="1" height="1" fill="#000"/>
<rect x="1190" y="637" width="1" height="1" fill="#000"/>
<rect x="1190" y="632" width="1" height="1" fill="#000"/>
<rect x="1190" y="626" width="1" height="1" fill="#000"/>
<rect x="1190" y="620" width="3" height="1" fill="#000"/>
<rect x="1190" y="615" width="1" height="1" fill="#000"/>
<rect x="1190" y="609" width="1" height="1" fill="#000"/>
<rect x="1190" y="603" width="1" height="1" fill="#000"/>
<rect x="1190" y="598" width="1" height="1" fill="#000"/>
<rect x="1190" y="591.5" width="6" height="1.2" fill="#000"/>
<rect x="1190" y="586" width="1" height="1" fill="#000"/>
<rect x="1190" y="581" width="1" height="1" fill="#000"/>
<rect x="1190" y="575" width="1" height="1" fill="#000"/>
<rect x="1190" y="569" width="1" height="1" fill="#000"/>
<rect x="1190" y="564" width="3" height="1" fill="#000"/>
<rect x="1190" y="558" width="1" height="1" fill="#000"/>
<rect x="1190" y="553" width="1" height="1" fill="#000"/>
<rect x="1190" y="547" width="1" height="1" fill="#000"/>
<rect x="1190" y="541" width="1" height="1" fill="#000"/>
<rect x="1190" y="535.5" width="6" height="1.2" fill="#000"/>
<rect x="1190" y="530" width="1" height="1" fill="#000"/>
<rect x="1190" y="524" width="1" height="1" fill="#000"/>
<rect x="1190" y="519" width="1" height="1" fill="#000"/>
<rect x="1190" y="513" width="1" height="1" fill="#000"/>
<rect x="1190" y="507" width="3" height="1" fill="#000"/>
<rect x="1190" y="502" width="1" height="1" fill="#000"/>
<rect x="1190" y="496" width="1" height="1" fill="#000"/>
<rect x="1190" y="490" width="1" height="1" fill="#000"/>
<rect x="1190" y="485" width="1" height="1" fill="#000"/>
<rect x="1190" y="478.5" width="6" height="1.2" fill="#000"/>
<rect x="1190" y="473" width="1" height="1" fill="#000"/>
<rect x="1190" y="468" width="1" height="1" fill="#000"/>
<rect x="1190" y="462" width="1" height="1" fill="#000"/>
<rect x="1190" y="457" width="1" height="1" fill="#000"/>
<rect x="1190" y="451" width="3" height="1" fill="#000"/>
<rect x="1190" y="445" width="1" height="1" fill="#000"/>
<rect x="1190" y="440" width="1" height="1" fill="#000"/>
<rect x="1190" y="434" width="1" height="1" fill="#000"/>
<rect x="1190" y="428" width="1" height="1" fill="#000"/>
<rect x="1190" y="422.5" width="6" height="1.2" fill="#000"/>
<rect x="1190" y="417" width="1" height="1" fill="#000"/>
<rect x="1190" y="411" width="1" height="1" fill="#000"/>
<rect x="1190" y="406" width="1" height="1" fill="#000"/>
<rect x="1190" y="400" width="1" height="1" fill="#000"/>
<rect x="1190" y="394" width="3" height="1" fill="#000"/>
<rect x="1190" y="389" width="1" height="1" fill="#000"/>
<rect x="1190" y="383" width="1" height="1" fill="#000"/>
<rect x="1190" y="377" width="1" height="1" fill="#000"/>
<rect x="1190" y="372" width="1" height="1" fill="#000"/>
<rect x="1190" y="365.5" width="6" height="1.2" fill="#000"/>
<rect x="1190" y="361" width="1" height="1" fill="#000"/>
<rect x="1190" y="355" width="1" height="1" fill="#000"/>
<rect x="1190" y="349" width="1" height="1" fill="#000"/>
<rect x="1190" y="344" width="1" height="1" fill="#000"/>
<rect x="1190" y="338" width="3" height="1" fill="#000"/>
<rect x="1190" y="332" width="1" height="1" fill="#000"/>
<rect x="1190" y="327" width="1" height="1" fill="#000"/>
<rect x="1190" y="321" width="1" height="1" fill="#000"/>
<rect x="1190" y="315" width="1" height="1" fill="#000"/>
<rect x="1190" y="309.5" width="6" height="1.2" fill="#000"/>
<rect x="1190" y="304" width="1" height="1" fill="#000"/>
<rect x="1190" y="298" width="1" height="1" fill="#000"/>
<rect x="1190" y="293" width="1" height="1" fill="#000"/>
<rect x="1190" y="287" width="1" height="1" fill="#000"/>
<rect x="1190" y="281" width="3" height="1" fill="#000"/>
<rect x="1190" y="276" width="1" height="1" fill="#000"/>
<rect x="1190" y="270" width="1" height="1" fill="#000"/>
<rect x="1190" y="265" width="1" height="1" fill="#000"/>
<rect x="1190" y="259" width="1" height="1" fill="#000"/>
<rect x="1190" y="252.5" width="6" height="1.2" fill="#000"/>
<rect x="1190" y="248" width="1" height="1" fill="#000"/>
<rect x="1190" y="242" width="1" height="1" fill="#000"/>
<rect x="1190" y="236" width="1" height="1" fill="#000"/>
<rect x="1190" y="231" width="1" height="1" fill="#000"/>
<rect x="1190" y="225" width="3" height="1" fill="#000"/>
<rect x="1190" y="219" width="1" height="1" fill="#000"/>
<rect x="1190" y="214" width="1" height="1" fill="#000"/>
<rect x="1190" y="208" width="1" height="1" fill="#000"/>
<rect x="1190" y="202" width="1" height="1" fill="#000"/>
<rect x="1190" y="196.5" width="6" height="1.2" fill="#000"/>
<rect x="1190" y="191" width="1" height="1" fill="#000"/>
<rect x="1190" y="185" width="1" height="1" fill="#000"/>
<rect x="1190" y="180" width="1" height="1" fill="#000"/>
<rect x="1190" y="174" width="1" height="1" fill="#000"/>
<rect x="1190" y="169" width="3" height="1" fill="#000"/>
<rect x="1190" y="163" width="1" height="1" fill="#000"/>
<rect x="1190" y="157" width="1" height="1" fill="#000"/>
<rect x="1190" y="152" width="1" height="1" fill="#000"/>
<rect x="1190" y="146" width="1" height="1" fill="#000"/>
<rect x="1190" y="139.5" width="6" height="1.2" fill="#000"/>
<rect x="1190" y="135" width="1" height="1" fill="#000"/>
<rect x="1190" y="129" width="1" height="1" fill="#000"/>
<rect x="1190" y="123" width="1" height="1" fill="#000"/>
<rect x="1190" y="118" width="1" height="1" fill="#000"/>
<rect x="1190" y="112" width="3" height="1" fill="#000"/>
</g>
<text x="1197" y="709.8" font-family="Liberation Sans" font-size="13" font-weight="bold" fill="#000" text-anchor="start">3800.00</text>
<text x="1197" y="653.3299999999999" font-family="Liberation Sans" font-size="13" font-weight="bold" fill="#000" text-anchor="start">3900.00</text>
<text x="1197" y="596.8599999999999" font-family="Liberation Sans" font-size="13" font-weight="bold" fill="#000" text-anchor="start">4000.00</text>
<text x="1197" y="540.3899999999999" font-family="Liberation Sans" font-size="13" font-weight="bold" fill="#000" text-anchor="start">4100.00</text>
<text x="1197" y="483.92" font-family="Liberation Sans" font-size="13" font-weight="bold" fill="#000" text-anchor="start">4200.00</text>
<text x="1197" y="427.45" font-family="Liberation Sans" font-size="13" font-weight="bold" fill="#000" text-anchor="start">4300.00</text>
<text x="1197" y="370.98" font-family="Liberation Sans" font-size="13" font-weight="bold" fill="#000" text-anchor="start">4400.00</text>
<text x="1197" y="314.51000000000005" font-family="Liberation Sans" font-size="13" font-weight="bold" fill="#000" text-anchor="start">4500.00</text>
<text x="1197" y="258.04" font-family="Liberation Sans" font-size="13" font-weight="bold" fill="#000" text-anchor="start">4600.00</text>
<text x="1197" y="201.57000000000002" font-family="Liberation Sans" font-size="13" font-weight="bold" fill="#000" text-anchor="start">4700.00</text>
<text x="1197" y="145.10000000000002" font-family="Liberation Sans" font-size="13" font-weight="bold" fill="#000" text-anchor="start">4800.00</text>
<rect x="1188.5" y="734.5" width="36" height="14" fill="#ffffe8" stroke="#000"/>
<text x="1194" y="747.6" font-family="Liberation Sans" font-size="13" font-weight="bold" fill="#000" text-anchor="start">3734</text>
<rect x="1224.5" y="732.5" width="23" height="16" fill="#c0c0c0" stroke="#000"/>
<rect x="1226" y="734" width="6" height="3" fill="#808080"/><path d="M1227,736.5 q9,-3 18,0" fill="none" stroke="#000" stroke-width="1.3"/><rect x="1234.5" y="735" width="3" height="11" fill="#000"/><rect x="1235.5" y="737" width="1" height="8" fill="#ff0"/><path d="M1229,737 l-2.5,7 h6 l-2,-7 M1243,737 l-2.5,7 h6 l-2,-7" fill="#fff" stroke="#000" stroke-width="1"/><path d="M1227,743.5 h5 M1240.5,743.5 h5" stroke="#ff0" stroke-width="1.3"/><path d="M1231,739 l5,2 l5,-2" fill="none" stroke="#ff0" stroke-width="1"/>
<rect x="1190" y="893.2" width="6" height="1.2" fill="#000"/>
<rect x="1190" y="871.9" width="3" height="1.2" fill="#000"/>
<rect x="1190" y="850.5" width="6" height="1.2" fill="#000"/>
<rect x="1190" y="829.1" width="3" height="1.2" fill="#000"/>
<rect x="1190" y="807.8" width="6" height="1.2" fill="#000"/>
<rect x="1190" y="786.4" width="3" height="1.2" fill="#000"/>
<rect x="1190" y="765.0" width="6" height="1.2" fill="#000"/>
<rect x="1190" y="902" width="1" height="1" fill="#000"/>
<rect x="1190" y="898" width="1" height="1" fill="#000"/>
<rect x="1190" y="894" width="1" height="1" fill="#000"/>
<rect x="1190" y="889" width="1" height="1" fill="#000"/>
<rect x="1190" y="885" width="1" height="1" fill="#000"/>
<rect x="1190" y="881" width="1" height="1" fill="#000"/>
<rect x="1190" y="877" width="1" height="1" fill="#000"/>
<rect x="1190" y="872" width="1" height="1" fill="#000"/>
<rect x="1190" y="868" width="1" height="1" fill="#000"/>
<rect x="1190" y="864" width="1" height="1" fill="#000"/>
<rect x="1190" y="860" width="1" height="1" fill="#000"/>
<rect x="1190" y="855" width="1" height="1" fill="#000"/>
<rect x="1190" y="851" width="1" height="1" fill="#000"/>
<rect x="1190" y="847" width="1" height="1" fill="#000"/>
<rect x="1190" y="842" width="1" height="1" fill="#000"/>
<rect x="1190" y="838" width="1" height="1" fill="#000"/>
<rect x="1190" y="834" width="1" height="1" fill="#000"/>
<rect x="1190" y="830" width="1" height="1" fill="#000"/>
<rect x="1190" y="825" width="1" height="1" fill="#000"/>
<rect x="1190" y="821" width="1" height="1" fill="#000"/>
<rect x="1190" y="817" width="1" height="1" fill="#000"/>
<rect x="1190" y="813" width="1" height="1" fill="#000"/>
<rect x="1190" y="808" width="1" height="1" fill="#000"/>
<rect x="1190" y="804" width="1" height="1" fill="#000"/>
<rect x="1190" y="800" width="1" height="1" fill="#000"/>
<rect x="1190" y="795" width="1" height="1" fill="#000"/>
<rect x="1190" y="791" width="1" height="1" fill="#000"/>
<rect x="1190" y="787" width="1" height="1" fill="#000"/>
<rect x="1190" y="783" width="1" height="1" fill="#000"/>
<rect x="1190" y="778" width="1" height="1" fill="#000"/>
<rect x="1190" y="774" width="1" height="1" fill="#000"/>
<rect x="1190" y="770" width="1" height="1" fill="#000"/>
<rect x="1190" y="766" width="1" height="1" fill="#000"/>
<rect x="1190" y="761" width="1" height="1" fill="#000"/>
<text x="1197" y="770.3" font-family="Liberation Sans" font-size="13" font-weight="bold" fill="#000" text-anchor="start">200</text>
<text x="1197" y="813.05" font-family="Liberation Sans" font-size="13" font-weight="bold" fill="#000" text-anchor="start">100</text>
<text x="1197" y="855.8" font-family="Liberation Sans" font-size="13" font-weight="bold" fill="#000" text-anchor="start">0</text>
<text x="1197" y="898.55" font-family="Liberation Sans" font-size="13" font-weight="bold" fill="#000" text-anchor="start">-100</text>
<text x="1218" y="921" font-family="Liberation Sans" font-size="13" font-weight="bold" fill="#000" text-anchor="middle">-154</text>
<rect x="801" y="152" width="57" height="1" fill="#ff0000"/>
<text x="829" y="148.3" font-family="Liberation Sans" font-size="13" font-weight="bold" fill="#000" text-anchor="middle">4781</text>
<rect x="801" y="334" width="57" height="1" fill="#ff0000"/>
<text x="829" y="328" font-family="Liberation Sans" font-size="13" font-weight="bold" fill="#000" text-anchor="middle">4457</text>
<rect x="801" y="430" width="57" height="1" fill="#ff0000"/>
<text x="829" y="424.6" font-family="Liberation Sans" font-size="13" font-weight="bold" fill="#000" text-anchor="middle">4289</text>
<rect x="801" y="522" width="57" height="1" fill="#ff0000"/>
<text x="829" y="517" font-family="Liberation Sans" font-size="13" font-weight="bold" fill="#000" text-anchor="middle">4121</text>
<rect x="801" y="706" width="57" height="1" fill="#ff0000"/>
<text x="829" y="701" font-family="Liberation Sans" font-size="13" font-weight="bold" fill="#000" text-anchor="middle">3796</text>
<text x="941" y="144.4" font-family="Liberation Sans" font-size="13" font-weight="bold" fill="#000" text-anchor="start">Next Echo and Pulse Highs</text>
<text x="941" y="192.5" font-family="Liberation Sans" font-size="13" font-weight="bold" fill="#000" text-anchor="start">* S/T BUY SIGNAL *</text>
<text x="941" y="208.4" font-family="Liberation Sans" font-size="13" font-weight="bold" fill="#000" text-anchor="start">* NO SHORT ALERT *</text>
<text x="941" y="240.3" font-family="Liberation Sans" font-size="13" font-weight="bold" fill="#000" text-anchor="start">S/T BUY Signal at 4770 on 18 Jan</text>
<text x="941" y="272.5" font-family="Liberation Sans" font-size="13" font-weight="bold" fill="#000" text-anchor="start">T volume Osc: negative on 29 Dec</text>
<text x="941" y="288.7" font-family="Liberation Sans" font-size="13" font-weight="bold" fill="#000" text-anchor="start">Up</text>
<text x="941" y="320" font-family="Liberation Sans" font-size="13" font-weight="bold" fill="#000" text-anchor="start">Osc: SELL Signal on 02 Jan</text>
<text x="941" y="336" font-family="Liberation Sans" font-size="13" font-weight="bold" fill="#000" text-anchor="start">Up a little</text>
<text x="941" y="400.3" font-family="Liberation Sans" font-size="13" font-weight="bold" fill="#000" text-anchor="start">Click here for</text>
<text x="941" y="416.25" font-family="Liberation Sans" font-size="13" font-weight="bold" fill="#000" text-anchor="start">More Information...</text>
<text x="941" y="704.4" font-family="Liberation Sans" font-size="13" font-weight="bold" fill="#000" text-anchor="start">Next Projected Low(s)</text>
<text x="739" y="207" font-family="Liberation Sans" font-size="13" font-weight="bold" fill="#000" text-anchor="start">S/T BUY SIGNAL</text>
<text x="669" y="593.3" font-family="Liberation Sans" font-size="13" font-weight="bold" fill="#000" text-anchor="start">Small T</text>
<text x="136.5" y="732.5" font-family="Liberation Sans" font-size="13" font-weight="bold" fill="#000" text-anchor="start">T Structure</text>
<text x="136" y="748" font-family="Liberation Sans" font-size="13" font-weight="bold" fill="#000" clip-path="url(#cm)">(collapsed)</text>
<text x="353" y="732.5" font-family="Liberation Sans" font-size="13" font-weight="bold" fill="#000" text-anchor="start">New T Structure</text>
<g shape-rendering="crispEdges">
<rect x="599" y="551" width="62" height="1" fill="#c0c0c0"/>
<rect x="668" y="551" width="63" height="1" fill="#c0c0c0"/>
<rect x="640" y="557" width="21" height="1" fill="#c0c0c0"/>
<rect x="668" y="557" width="21" height="1" fill="#c0c0c0"/>
<rect x="660" y="557" width="2" height="34" fill="#808080"/>
<rect x="346" y="603" width="428" height="1" fill="#c0c0c0"/>
<rect x="346" y="608" width="414" height="1" fill="#c0c0c0"/>
<rect x="346" y="615" width="393" height="1" fill="#c0c0c0"/>
<rect x="346" y="621" width="386" height="1" fill="#c0c0c0"/>
<rect x="346" y="628" width="365" height="1" fill="#c0c0c0"/>
<rect x="346" y="634" width="309" height="1" fill="#c0c0c0"/>
<rect x="346" y="640" width="274" height="1" fill="#c0c0c0"/>
<rect x="346" y="646" width="232" height="1" fill="#c0c0c0"/>
<rect x="346" y="651" width="211" height="1" fill="#c0c0c0"/>
<rect x="346" y="657" width="190" height="1" fill="#c0c0c0"/>
<rect x="346" y="661" width="162" height="1" fill="#808080"/>
<rect x="346" y="668" width="141" height="1" fill="#c0c0c0"/>
<rect x="346" y="674" width="127" height="1" fill="#808080"/>
<rect x="346" y="680" width="78" height="1" fill="#c0c0c0"/>
<rect x="346" y="686" width="50" height="1" fill="#808080"/>
<rect x="346" y="691" width="14" height="1" fill="#c0c0c0"/>
<rect x="78" y="605" width="262" height="1" fill="#c0c0c0"/>
<rect x="78" y="610" width="262" height="1" fill="#c0c0c0"/>
<rect x="78" y="616" width="262" height="1" fill="#c0c0c0"/>
<rect x="78" y="622" width="262" height="1" fill="#c0c0c0"/>
<rect x="78" y="628" width="262" height="1" fill="#c0c0c0"/>
<rect x="78" y="634" width="262" height="1" fill="#c0c0c0"/>
<rect x="78" y="639" width="262" height="1" fill="#c0c0c0"/>
<rect x="108" y="646" width="232" height="1" fill="#c0c0c0"/>
<rect x="129" y="651" width="211" height="1" fill="#c0c0c0"/>
<rect x="150" y="657" width="190" height="1" fill="#c0c0c0"/>
<rect x="178" y="662" width="162" height="1" fill="#808080"/>
<rect x="199" y="669" width="141" height="1" fill="#c0c0c0"/>
<rect x="213" y="673" width="127" height="1" fill="#808080"/>
<rect x="262" y="679" width="78" height="1" fill="#c0c0c0"/>
<rect x="290" y="686" width="50" height="1" fill="#808080"/>
<rect x="325" y="691" width="15" height="1" fill="#c0c0c0"/>
<rect x="78" y="670" width="100" height="1" fill="#c0c0c0"/>
<rect x="78" y="675" width="58" height="1" fill="#c0c0c0"/>
<rect x="78" y="681" width="38" height="1" fill="#c0c0c0"/>
<rect x="78" y="688" width="17" height="1" fill="#c0c0c0"/>
<rect x="78" y="694" width="3" height="1" fill="#c0c0c0"/>
<rect x="129" y="693" width="85" height="1" fill="#c0c0c0"/>
<rect x="150" y="700" width="64" height="2" fill="#808080"/>
<rect x="178" y="707" width="36" height="1" fill="#c0c0c0"/>
<rect x="199" y="711" width="15" height="1" fill="#c0c0c0"/>
<rect x="220" y="692" width="85" height="1" fill="#c0c0c0"/>
<rect x="220" y="699" width="65" height="2" fill="#808080"/>
<rect x="220" y="705" width="36" height="1" fill="#c0c0c0"/>
<rect x="220" y="711" width="15" height="1" fill="#c0c0c0"/>
<rect x="212" y="712" width="2" height="35" fill="#808080"/>
<rect x="338" y="690" width="2" height="34" fill="#808080"/>
</g>
<g clip-path="url(#cm)">
<polyline points="80.6,479.3 116.7,476.7 142.5,474.1 155.3,475.4 176.6,482.5 203.1,491.8 220.4,499.8 243.0,505.1 282.8,507.7 296.1,511.0 320.0,518.4 341.0,529.5 353.8,535.4 374.4,537.1 413.9,531.1 474.1,503.6 525.6,481.3 560.0,464.1 591.4,444.1 646.1,408.5 700.8,381.2 739.1,366.1" fill="none" stroke="#008080" stroke-width="1" stroke-linejoin="round" />
<polyline points="80.6,499.1 150.0,485.8 189.8,479.8 229.7,475.2 256.2,470.5 282.8,463.9 320.0,457.9 391.6,448.6 456.9,440.0 536.7,424.9 613.3,403.0 673.4,383.9 739.1,362.0" fill="none" stroke="#0000ff" stroke-width="1" stroke-linejoin="round" />
<polyline points="80.6,493.4 150.0,486.5 176.6,483.2 229.7,481.8 282.8,478.5 340.0,477.0 391.6,474.4 443.1,467.5 494.7,460.6 560.0,451.2 646.1,429.0 739.1,412.6" fill="none" stroke="#00ffff" stroke-width="1" stroke-linejoin="round" />
<polyline points="80.0,237.5 100.0,235.0 125.0,232.0 145.0,231.8 157.5,235.0 175.0,240.0 192.5,247.5 210.0,252.5 225.0,261.2 250.0,265.0 287.5,268.0 312.5,277.5 337.5,290.0 355.0,300.0 370.0,301.2 387.4,297.3 410.0,294.7 418.0,292.0 436.6,282.7 456.5,272.1 476.4,262.8 496.3,252.2 516.2,242.9 529.5,237.6 542.8,230.9 556.1,224.3 570.0,210.9 598.1,191.3 626.3,168.8 654.4,153.3 668.4,149.1 682.5,137.8 696.6,130.8 710.6,126.6 724.7,119.5 738.8,111.1" fill="none" stroke="#ff0000" stroke-width="1" stroke-linejoin="round" />
<polyline points="80.0,260.0 113.8,260.8 125.0,256.2 147.5,250.8 162.5,255.0 175.0,259.2 187.5,270.0 205.0,285.0 220.0,300.0 237.5,312.5 255.9,320.5 273.9,330.9 282.8,334.0 296.1,340.6 309.4,344.6 323.9,347.9 337.2,356.6 353.1,362.5 373.0,359.9 393.0,357.2 415.5,355.2 432.8,344.6 449.8,321.2 463.1,300.0 476.4,281.4 489.7,260.2 503.0,244.2 516.2,229.6 529.5,219.4 540.0,209.6 556.3,194.2 572.5,178.7 588.8,164.1 598.1,154.7 612.2,143.4 626.3,130.8 640.3,120.9 657.2,111.1 668.4,104.1 681.0,97.0" fill="none" stroke="#a0a0a0" stroke-width="2.2" stroke-linejoin="round" />
<polyline points="80.6,416.1 114.1,417.4 129.6,412.2 147.6,407.8 163.3,411.0 176.6,417.6 189.8,428.3 205.8,440.2 216.4,453.3 236.3,466.6 256.2,473.2 269.5,481.2 296.1,489.1 312.0,495.8 325.5,498.6 335.8,508.9 353.8,513.0 374.4,510.5 415.6,505.3 436.3,491.6 456.9,467.5 476.6,435.9 498.4,405.8 520.3,383.9 547.7,362.0 570.0,343.8 591.1,322.7 612.2,307.2 633.3,290.3 654.4,277.7 675.5,263.6 696.6,251.6 710.6,248.1 731.7,245.3 738.8,241.8" fill="none" stroke="#a0a0a0" stroke-width="2.2" stroke-linejoin="round" />
<polyline points="80.0,285.0 91.3,287.3 104.6,286.6 123.2,282.6 133.8,287.3 149.7,287.9 157.7,280.6 173.6,270.0 185.0,261.2 205.0,272.5 227.5,283.8 243.0,302.5 258.5,323.1 261.6,330.0 276.2,349.9 290.8,369.2 300.1,369.2 319.9,365.9 339.8,350.6 366.4,346.6 386.3,339.3 403.6,338.6 410.0,331.9 416.6,327.9 423.3,318.6 429.9,297.3 436.6,281.4 447.2,261.5 456.5,241.6 465.8,224.3 472.4,219.6 487.0,223.0 500.3,230.3 510.9,225.0 522.9,224.3 536.2,225.6 541.5,232.3 553.8,233.2 560.3,225.1 566.9,212.9 574.2,200.7 580.7,190.9 588.8,176.3 595.3,162.4 612.2,143.4 626.3,123.8 640.3,113.9 648.8,111.1 661.4,118.1 671.3,125.2 685.3,132.2 693.7,135.0 710.6,133.6 721.9,132.2 738.8,115.3" fill="none" stroke="#800000" stroke-width="1" stroke-linejoin="round" />
<polyline points="80.7,285.3 93.9,293.9 104.6,290.6 113.9,291.9 121.8,285.9 131.1,292.6 143.1,297.9 151.0,307.2 157.7,328.4 164.6,343.3 173.9,356.6 184.5,379.1 196.5,385.8 205.8,389.8 212.4,401.7 219.0,404.4 227.0,408.4 235.0,399.1 243.0,388.4 252.3,369.8 262.9,365.2 269.5,365.9 276.2,360.5 282.8,356.6 290.8,363.2 296.1,373.8 310.0,413.5 325.5,444.4 335.8,457.3 346.1,462.5 356.4,457.3 363.7,442.9 371.7,412.3 386.3,369.8 395.6,361.2 403.6,359.9 408.9,347.3 416.9,340.6 423.3,321.2 436.6,294.7 449.8,274.8 463.1,261.5 476.4,250.9 489.7,246.9 503.0,241.6 510.9,234.9 522.9,234.9 540.0,230.0 548.1,218.6 556.3,208.8 561.2,198.2 568.5,180.3 576.6,169.8 583.1,160.0 591.1,144.8 598.1,149.1 612.2,140.6 626.3,128.0 640.3,120.9 647.3,123.8 654.4,137.8 661.4,146.3 668.4,149.1 682.5,135.0 692.3,123.8 703.6,120.2 714.8,123.8 721.9,125.2 728.9,118.1 738.8,98.4" fill="none" stroke="#ff8000" stroke-width="1" stroke-linejoin="round" />
<polyline points="80.7,355.0 91.3,361.6 100.6,360.3 113.9,362.3 121.8,356.3 131.1,362.3 141.7,367.6 149.7,376.2 158.0,396.4 165.9,415.0 176.6,436.2 185.9,449.3 207.1,458.6 212.4,470.5 227.0,475.2 236.3,466.6 250.9,445.5 262.9,433.6 268.2,436.2 282.8,425.6 296.1,441.6 302.7,457.5 325.5,483.1 335.8,519.2 345.2,528.5 355.5,520.8 365.8,496.7 374.4,474.4 381.3,457.2 393.0,430.9 403.6,429.6 419.5,403.0 432.8,376.5 446.1,356.6 463.1,331.9 476.4,321.2 496.3,317.3 506.9,306.6 520.2,306.6 529.5,310.6 542.8,302.6 556.1,284.1 569.4,252.2 586.9,227.8 598.1,220.8 612.2,209.5 626.3,199.7 634.7,196.2 643.1,198.3 651.6,206.7 660.0,216.6 668.4,225.0 676.9,216.6 689.5,202.5 703.6,195.5 717.6,201.1 724.7,191.3 738.8,173.0" fill="none" stroke="#ff8000" stroke-width="1" stroke-linejoin="round" />
<polyline points="80.7,396.2 117.8,395.5 124.5,390.8 137.8,380.2 147.1,375.6 151.0,375.6 157.7,385.5 163.3,393.7 176.6,415.0 189.8,436.2 205.8,458.6 213.7,471.9 229.7,489.1 236.3,490.5 245.6,487.8 256.2,483.8 262.9,477.2 272.2,473.2 282.8,463.9 289.4,461.9 296.1,462.6 309.4,474.5 320.0,481.2 333.2,503.7 340.0,522.5 350.3,530.2 365.8,530.2 403.6,532.8 417.3,537.1 425.9,546.6 438.0,553.4 458.6,545.7 467.2,534.5 477.5,500.2 487.8,460.6 498.4,424.9 509.4,408.5 528.5,381.2 542.2,348.4 555.9,319.7 569.5,326.5 589.7,328.3 600.9,322.7 612.2,319.8 623.4,312.8 633.3,301.6 647.3,291.7 657.2,276.3 667.0,256.6 676.9,238.3 688.1,220.0 700.8,207.6 714.5,203.5 721.9,201.8 731.7,206.0 738.8,204.6" fill="none" stroke="#000000" stroke-width="1" stroke-linejoin="round" />
<polyline points="80.7,349.0 93.9,349.0 104.6,347.7 117.8,345.7 131.1,343.7 141.7,343.0 152.4,345.7 169.9,351.2 189.8,359.2 209.8,368.5 229.7,375.2 249.6,376.5 282.8,377.1 296.1,381.8 309.4,388.4 319.9,391.1 333.2,399.1 353.1,409.7 379.7,409.7 399.6,406.4 416.9,402.4 441.0,392.1 468.4,375.7 495.7,364.8 528.5,351.1 544.9,344.3 570.0,325.5 591.1,308.6 608.0,300.2 640.3,276.3 661.4,267.8 696.6,249.5 724.7,238.3 738.8,229.8" fill="none" stroke="#000000" stroke-width="2.2" stroke-linejoin="round" />
<polyline points="80.7,336.4 96.6,336.4 111.2,335.7 121.8,332.4 133.8,328.4 151.0,326.4 158.0,330.0 171.2,334.0 189.8,347.3 209.8,363.2 229.7,376.5 243.0,385.8 256.2,392.4 269.5,397.7 282.8,401.7 296.1,408.4 309.4,415.0 320.0,417.6 333.2,426.9 353.1,434.9 373.0,432.9 393.0,431.6 412.9,428.3 426.2,421.6 439.4,409.7 452.7,393.7 470.0,369.8 483.0,345.1 503.0,314.6 526.9,297.3 542.8,284.1 562.7,266.8 580.0,250.9 609.4,227.8 626.3,213.8 647.3,198.3 668.4,185.6 689.5,174.4 710.6,167.3 724.7,161.7 738.8,155.4" fill="none" stroke="#00ffff" stroke-width="1" stroke-linejoin="round" />
<polyline points="80.7,346.4 97.9,347.0 115.2,345.7 124.5,342.4 137.8,339.7 152.7,341.0 169.9,342.0 189.8,357.9 209.8,373.8 229.7,389.8 243.0,399.1 256.2,405.7 269.5,411.7 282.8,416.3 296.1,423.0 309.4,427.6 320.0,428.3 333.2,436.2 359.8,444.2 386.3,441.6 412.9,438.2 426.2,433.6 439.4,423.0 452.7,408.4 470.0,385.8 491.0,345.1 510.9,321.2 529.5,308.0 545.5,294.7 562.7,278.7 580.0,261.5 620.6,227.8 640.3,213.8 661.4,202.5 682.5,191.3 703.6,181.4 717.6,175.8 738.8,166.6" fill="none" stroke="#00ffff" stroke-width="1" stroke-linejoin="round" />
<polyline points="80.7,341.0 97.9,341.7 111.2,342.4 121.8,339.0 137.8,332.4 151.0,333.1 169.9,338.0 189.8,352.6 209.8,368.5 229.7,384.5 243.0,395.1 256.2,401.7 269.5,407.0 282.8,411.0 296.1,417.6 309.4,423.0 320.0,423.6 333.2,432.3 355.8,440.2 379.7,436.2 403.6,436.2 419.5,430.9 432.8,421.6 446.1,408.4 459.4,391.1 470.0,377.8 487.0,345.1 506.9,318.6 526.9,302.6 542.8,289.4 562.7,272.1 580.0,256.2 615.0,227.8 633.3,213.8 654.4,199.7 675.5,188.4 696.6,177.2 710.6,170.2 724.7,166.6 738.8,160.3" fill="none" stroke="#ffff00" stroke-width="1.3" stroke-linejoin="round" />
<polyline points="80.7,340.0 97.9,340.7 111.2,341.4 121.8,338.0 137.8,331.4 151.0,332.1 169.9,337.0 189.8,351.6 209.8,367.5 229.7,383.5 243.0,394.1 256.2,400.7 269.5,406.0 282.8,410.0 296.1,416.6 309.4,422.0 320.0,422.6 333.2,431.3 355.8,439.2 379.7,435.2 403.6,435.2 419.5,429.9 432.8,420.6 446.1,407.4 459.4,390.1 470.0,376.8 487.0,344.1 506.9,317.6 526.9,301.6 542.8,288.4 562.7,271.1 580.0,255.2 615.0,226.8 633.3,212.8 654.4,198.7 675.5,187.4 696.6,176.2 710.6,169.2 724.7,165.6 738.8,159.3" fill="none" stroke="#008080" stroke-width="0.8" stroke-linejoin="round" />
<polyline points="80.7,313.8 93.9,321.1 104.6,319.1 113.9,321.1 121.8,315.8 131.1,321.8 144.4,328.4 149.7,332.4 154.0,348.6 160.6,365.9 168.6,380.5 173.9,388.4 183.2,408.4 189.8,412.3 203.1,417.6 211.1,430.9 227.0,436.2 235.0,428.3 245.6,409.7 256.2,396.4 264.2,393.7 273.5,397.7 282.8,384.5 289.4,393.7 296.1,404.4 302.3,418.7 322.9,457.3 335.8,478.0 346.1,483.1 356.4,478.0 365.1,460.1 373.0,430.9 382.3,407.0 395.6,389.8 403.6,388.4 414.2,380.5 422.2,363.2 425.9,345.1 436.6,321.2 449.8,302.6 463.1,290.7 473.7,281.4 484.4,277.4 496.3,274.8 506.9,265.5 521.6,265.5 526.9,269.4 536.2,268.1 544.1,264.1 556.3,239.7 564.4,217.0 574.2,202.3 582.3,188.5 591.3,176.3 596.1,179.5 601.0,178.7 609.2,172.2 619.2,163.1 630.5,154.7 638.9,153.3 647.3,163.1 654.4,171.6 661.4,177.2 668.4,181.4 676.9,173.0 686.7,163.1 696.6,153.3 705.0,152.6 713.4,163.1 717.6,164.5 724.7,156.1 738.8,126.6" fill="none" stroke="#ff00ff" stroke-width="1" stroke-linejoin="round" />
<polyline points="80.7,322.5 93.9,327.1 104.6,324.4 115.2,326.4 123.2,321.1 132.5,328.4 141.7,332.4 148.4,336.4 152.7,353.9 160.6,371.2 168.6,385.8 175.2,396.4 183.2,415.0 192.5,420.3 203.1,423.6 211.1,436.2 227.0,440.9 236.3,430.9 245.6,415.0 256.2,401.7 264.2,399.1 272.2,404.4 282.8,391.1 290.8,397.7 298.8,408.4 302.3,434.1 322.9,467.7 335.8,488.3 346.1,490.9 356.4,485.7 366.4,460.1 375.7,430.9 385.0,409.7 395.6,395.1 404.9,392.4 415.5,375.2 424.8,352.6 428.6,345.1 439.2,323.9 452.5,305.3 465.8,293.4 475.1,284.1 484.4,282.7 496.3,280.1 506.9,271.4 521.6,272.1 526.9,276.1 536.2,273.4 545.4,266.8 558.7,239.7 566.9,221.0 576.6,205.6 591.3,182.0 596.1,186.0 602.7,185.2 610.0,180.0 619.2,170.2 630.5,160.3 638.9,158.9 648.8,170.2 655.8,178.6 662.8,185.6 668.4,187.0 676.9,178.6 686.7,168.8 696.6,160.3 705.0,157.5 713.4,161.7 717.6,163.1 724.7,158.9 738.8,133.6" fill="none" stroke="#00ff00" stroke-width="1" stroke-linejoin="round" />
<polyline points="80.7,327.1 93.9,333.1 104.6,331.1 115.2,332.4 124.5,327.1 133.8,329.1 144.4,338.4 149.7,344.4 152.7,357.9 160.6,376.5 168.6,389.8 177.9,404.4 183.2,420.3 192.5,423.0 203.1,430.9 211.1,444.2 227.0,447.5 236.3,438.9 245.6,423.0 256.2,407.0 264.2,404.4 273.5,402.4 282.8,396.4 290.8,404.4 298.8,415.0 302.3,441.9 322.9,478.0 335.8,498.6 346.1,501.2 356.4,493.4 367.7,460.1 377.0,433.6 386.3,412.3 395.6,401.7 404.9,401.7 416.9,380.5 427.5,349.9 431.2,345.1 444.5,323.9 456.5,308.0 469.8,294.7 481.7,290.7 495.0,286.7 506.9,276.8 520.2,277.4 526.9,280.1 536.2,278.7 546.8,270.8 556.0,257.5 561.2,239.7 568.5,223.5 579.1,208.8 591.3,190.1 596.1,192.5 601.8,190.1 610.0,184.0 619.2,178.6 630.5,168.8 640.3,164.5 648.8,174.4 657.2,185.6 664.2,191.3 669.8,192.7 678.3,188.4 688.1,180.0 696.6,171.6 705.0,165.9 713.4,168.8 717.6,170.2 724.7,168.8 738.8,140.6" fill="none" stroke="#ff00ff" stroke-width="1" stroke-linejoin="round" />
<g shape-rendering="crispEdges">
<rect x="80" y="315" width="1" height="27" fill="#000"/>
<rect x="78" y="315" width="5" height="15" fill="#000"/>
<rect x="87" y="334" width="1" height="13" fill="#000"/>
<rect x="85.5" y="338.5" width="4" height="9" fill="#fff" stroke="#000" stroke-width="1"/>
<rect x="94" y="325" width="1" height="13" fill="#000"/>
<rect x="92.5" y="334.5" width="4" height="4" fill="#fff" stroke="#000" stroke-width="1"/>
<rect x="101" y="315" width="1" height="12" fill="#000"/>
<rect x="99.5" y="318.5" width="4" height="3" fill="#fff" stroke="#000" stroke-width="1"/>
<rect x="109" y="317" width="1" height="16" fill="#000"/>
<rect x="107" y="325" width="5" height="7" fill="#000"/>
<rect x="115" y="321" width="1" height="14" fill="#000"/>
<rect x="113.5" y="328.5" width="4" height="4" fill="#fff" stroke="#000" stroke-width="1"/>
<rect x="122" y="303" width="1" height="18" fill="#000"/>
<rect x="120.5" y="308.5" width="4" height="9" fill="#fff" stroke="#000" stroke-width="1"/>
<rect x="129" y="311" width="1" height="27" fill="#000"/>
<rect x="127" y="311" width="5" height="27" fill="#000"/>
<rect x="136" y="330" width="1" height="12" fill="#000"/>
<rect x="134.5" y="336.5" width="4" height="6" fill="#fff" stroke="#000" stroke-width="1"/>
<rect x="144" y="340" width="1" height="16" fill="#000"/>
<rect x="142" y="340" width="6" height="1" fill="#000"/>
<rect x="150" y="332" width="1" height="34" fill="#000"/>
<rect x="148" y="336" width="5" height="30" fill="#000"/>
<rect x="157" y="381" width="1" height="26" fill="#f00"/>
<rect x="155" y="381" width="5" height="26" fill="#f00"/>
<rect x="164" y="390" width="1" height="22" fill="#f00"/>
<rect x="162" y="399" width="5" height="13" fill="#f00"/>
<rect x="172" y="402" width="1" height="18" fill="#f00"/>
<rect x="170.5" y="402.5" width="4" height="16" fill="#fff" stroke="#f00" stroke-width="1"/>
<rect x="178" y="416" width="1" height="22" fill="#f00"/>
<rect x="176" y="416" width="5" height="22" fill="#f00"/>
<rect x="185" y="428" width="1" height="28" fill="#f00"/>
<rect x="183" y="433" width="5" height="5" fill="#f00"/>
<rect x="192" y="413" width="1" height="30" fill="#f00"/>
<rect x="190.5" y="424.5" width="4" height="16" fill="#fff" stroke="#f00" stroke-width="1"/>
<rect x="199" y="404" width="1" height="32" fill="#f00"/>
<rect x="197" y="407" width="5" height="23" fill="#f00"/>
<rect x="206" y="423" width="1" height="21" fill="#f00"/>
<rect x="204.5" y="429.5" width="4" height="3" fill="#fff" stroke="#f00" stroke-width="1"/>
<rect x="213" y="440" width="1" height="29" fill="#f00"/>
<rect x="211" y="440" width="5" height="24" fill="#f00"/>
<rect x="220" y="440" width="1" height="27" fill="#f00"/>
<rect x="218.5" y="443.5" width="4" height="17" fill="#fff" stroke="#f00" stroke-width="1"/>
<rect x="228" y="442" width="1" height="23" fill="#f00"/>
<rect x="226" y="446" width="6" height="1" fill="#f00"/>
<rect x="234" y="410" width="1" height="58" fill="#f00"/>
<rect x="232.5" y="418.5" width="4" height="43" fill="#fff" stroke="#f00" stroke-width="1"/>
<rect x="241" y="399" width="1" height="32" fill="#f00"/>
<rect x="239.5" y="404.5" width="4" height="25" fill="#fff" stroke="#f00" stroke-width="1"/>
<rect x="248" y="376" width="1" height="26" fill="#000"/>
<rect x="246.5" y="390.5" width="4" height="10" fill="#fff" stroke="#000" stroke-width="1"/>
<rect x="255" y="379" width="1" height="17" fill="#000"/>
<rect x="253.5" y="379.5" width="4" height="6" fill="#fff" stroke="#000" stroke-width="1"/>
<rect x="262" y="374" width="1" height="33" fill="#000"/>
<rect x="260" y="376" width="5" height="19" fill="#000"/>
<rect x="269" y="379" width="1" height="36" fill="#f00"/>
<rect x="267" y="389" width="5" height="19" fill="#f00"/>
<rect x="276" y="376" width="1" height="24" fill="#000"/>
<rect x="274.5" y="381.5" width="4" height="18" fill="#fff" stroke="#000" stroke-width="1"/>
<rect x="284" y="370" width="1" height="32" fill="#000"/>
<rect x="282.5" y="381.5" width="4" height="17" fill="#fff" stroke="#000" stroke-width="1"/>
<rect x="290" y="387" width="1" height="33" fill="#f00"/>
<rect x="288" y="390" width="5" height="26" fill="#f00"/>
<rect x="297" y="400" width="1" height="40" fill="#f00"/>
<rect x="295" y="411" width="5" height="25" fill="#f00"/>
<rect x="304" y="438" width="1" height="28" fill="#f00"/>
<rect x="302" y="438" width="5" height="28" fill="#f00"/>
<rect x="311" y="457" width="1" height="27" fill="#f00"/>
<rect x="309.5" y="470.5" width="4" height="3" fill="#fff" stroke="#f00" stroke-width="1"/>
<rect x="318" y="447" width="1" height="15" fill="#f00"/>
<rect x="316.5" y="452.5" width="4" height="7" fill="#fff" stroke="#f00" stroke-width="1"/>
<rect x="325" y="461" width="1" height="27" fill="#f00"/>
<rect x="323" y="461" width="5" height="27" fill="#f00"/>
<rect x="333" y="488" width="1" height="31" fill="#f00"/>
<rect x="331" y="493" width="5" height="22" fill="#f00"/>
<rect x="339" y="501" width="1" height="31" fill="#f00"/>
<rect x="337" y="506" width="5" height="22" fill="#f00"/>
<rect x="346" y="493" width="1" height="24" fill="#f00"/>
<rect x="344.5" y="499.5" width="4" height="15" fill="#fff" stroke="#f00" stroke-width="1"/>
<rect x="353" y="479" width="1" height="27" fill="#f00"/>
<rect x="351.5" y="483.5" width="4" height="13" fill="#fff" stroke="#f00" stroke-width="1"/>
<rect x="360" y="455" width="1" height="27" fill="#f00"/>
<rect x="358.5" y="457.5" width="4" height="22" fill="#fff" stroke="#f00" stroke-width="1"/>
<rect x="367" y="413" width="1" height="29" fill="#000"/>
<rect x="365.5" y="413.5" width="4" height="29" fill="#fff" stroke="#000" stroke-width="1"/>
<rect x="374" y="381" width="1" height="23" fill="#00f"/>
<rect x="372.5" y="390.5" width="4" height="14" fill="#fff" stroke="#00f" stroke-width="1"/>
<rect x="382" y="382" width="1" height="14" fill="#00f"/>
<rect x="380" y="388" width="6" height="1" fill="#00f"/>
<rect x="388" y="374" width="1" height="16" fill="#00f"/>
<rect x="386.5" y="378.5" width="4" height="7" fill="#fff" stroke="#00f" stroke-width="1"/>
<rect x="395" y="371" width="1" height="18" fill="#00f"/>
<rect x="393" y="375" width="6" height="1" fill="#00f"/>
<rect x="402" y="371" width="1" height="26" fill="#00f"/>
<rect x="400" y="371" width="5" height="26" fill="#00f"/>
<rect x="409" y="356" width="1" height="36" fill="#00f"/>
<rect x="407.5" y="358.5" width="4" height="29" fill="#fff" stroke="#00f" stroke-width="1"/>
<rect x="416" y="354" width="1" height="14" fill="#00f"/>
<rect x="414.5" y="360.5" width="4" height="3" fill="#fff" stroke="#00f" stroke-width="1"/>
<rect x="423" y="305" width="1" height="29" fill="#00f"/>
<rect x="421.5" y="313.5" width="4" height="20" fill="#fff" stroke="#00f" stroke-width="1"/>
<rect x="431" y="298" width="1" height="13" fill="#00f"/>
<rect x="429" y="308" width="6" height="1" fill="#00f"/>
<rect x="438" y="305" width="1" height="12" fill="#00f"/>
<rect x="436.5" y="305.5" width="4" height="6" fill="#fff" stroke="#00f" stroke-width="1"/>
<rect x="444" y="298" width="1" height="11" fill="#00f"/>
<rect x="442.5" y="302.5" width="4" height="3" fill="#fff" stroke="#00f" stroke-width="1"/>
<rect x="451" y="278" width="1" height="25" fill="#00f"/>
<rect x="449.5" y="283.5" width="4" height="20" fill="#fff" stroke="#00f" stroke-width="1"/>
<rect x="459" y="286" width="1" height="14" fill="#00f"/>
<rect x="457" y="293" width="6" height="1" fill="#00f"/>
<rect x="465" y="271" width="1" height="12" fill="#00f"/>
<rect x="463" y="279" width="6" height="1" fill="#00f"/>
<rect x="472" y="276" width="1" height="2" fill="#00f"/>
<rect x="470.5" y="276.5" width="4" height="2" fill="#fff" stroke="#00f" stroke-width="1"/>
<rect x="479" y="276" width="1" height="7" fill="#00f"/>
<rect x="477" y="279" width="5" height="2" fill="#00f"/>
<rect x="486" y="271" width="1" height="16" fill="#00f"/>
<rect x="484.5" y="279.5" width="4" height="5" fill="#fff" stroke="#00f" stroke-width="1"/>
<rect x="493" y="260" width="1" height="21" fill="#00f"/>
<rect x="491" y="269" width="5" height="12" fill="#00f"/>
<rect x="500" y="269" width="1" height="20" fill="#00f"/>
<rect x="498.5" y="271.5" width="4" height="8" fill="#fff" stroke="#00f" stroke-width="1"/>
<rect x="507" y="254" width="1" height="23" fill="#00f"/>
<rect x="505.5" y="256.5" width="4" height="21" fill="#fff" stroke="#00f" stroke-width="1"/>
<rect x="514" y="268" width="1" height="15" fill="#00f"/>
<rect x="512.5" y="270.5" width="4" height="3" fill="#fff" stroke="#00f" stroke-width="1"/>
<rect x="522" y="266" width="1" height="15" fill="#00f"/>
<rect x="520.5" y="272.5" width="4" height="5" fill="#fff" stroke="#00f" stroke-width="1"/>
<rect x="528" y="259" width="1" height="25" fill="#00f"/>
<rect x="526" y="261" width="5" height="22" fill="#00f"/>
<rect x="536" y="258" width="1" height="14" fill="#00f"/>
<rect x="534.5" y="262.5" width="4" height="9" fill="#fff" stroke="#00f" stroke-width="1"/>
<rect x="542" y="248" width="1" height="20" fill="#00f"/>
<rect x="540.5" y="251.5" width="4" height="16" fill="#fff" stroke="#00f" stroke-width="1"/>
<rect x="550" y="240" width="1" height="18" fill="#00f"/>
<rect x="548.5" y="241.5" width="4" height="17" fill="#fff" stroke="#00f" stroke-width="1"/>
<rect x="556" y="228" width="1" height="20" fill="#00f"/>
<rect x="554.5" y="229.5" width="4" height="14" fill="#fff" stroke="#00f" stroke-width="1"/>
<rect x="563" y="191" width="1" height="37" fill="#00f"/>
<rect x="561.5" y="193.5" width="4" height="35" fill="#fff" stroke="#00f" stroke-width="1"/>
<rect x="570" y="175" width="1" height="25" fill="#00f"/>
<rect x="568" y="186" width="6" height="1" fill="#00f"/>
<rect x="577" y="182" width="1" height="11" fill="#00f"/>
<rect x="575.5" y="186.5" width="4" height="3" fill="#fff" stroke="#00f" stroke-width="1"/>
<rect x="584" y="169" width="1" height="15" fill="#00f"/>
<rect x="582.5" y="174.5" width="4" height="8" fill="#fff" stroke="#00f" stroke-width="1"/>
<rect x="591" y="158" width="1" height="16" fill="#00f"/>
<rect x="589.5" y="158.5" width="4" height="15" fill="#fff" stroke="#00f" stroke-width="1"/>
<rect x="598" y="153" width="1" height="46" fill="#00f"/>
<rect x="596" y="160" width="5" height="39" fill="#00f"/>
<rect x="606" y="169" width="1" height="22" fill="#00f"/>
<rect x="604.5" y="170.5" width="4" height="14" fill="#fff" stroke="#00f" stroke-width="1"/>
<rect x="613" y="156" width="1" height="20" fill="#00f"/>
<rect x="611" y="166" width="6" height="1" fill="#00f"/>
<rect x="620" y="149" width="1" height="15" fill="#00f"/>
<rect x="618.5" y="155.5" width="4" height="8" fill="#fff" stroke="#00f" stroke-width="1"/>
<rect x="627" y="149" width="1" height="9" fill="#00f"/>
<rect x="625.5" y="151.5" width="4" height="4" fill="#fff" stroke="#00f" stroke-width="1"/>
<rect x="633" y="144" width="1" height="6" fill="#00f"/>
<rect x="631" y="148" width="5" height="2" fill="#00f"/>
<rect x="640" y="147" width="1" height="20" fill="#00f"/>
<rect x="638" y="150" width="5" height="8" fill="#00f"/>
<rect x="647" y="167" width="1" height="17" fill="#00f"/>
<rect x="645" y="171" width="5" height="3" fill="#00f"/>
<rect x="654" y="182" width="1" height="14" fill="#00f"/>
<rect x="652" y="183" width="5" height="12" fill="#00f"/>
<rect x="661" y="182" width="1" height="22" fill="#00f"/>
<rect x="659" y="198" width="5" height="6" fill="#00f"/>
<rect x="669" y="186" width="1" height="21" fill="#00f"/>
<rect x="667.5" y="198.5" width="4" height="4" fill="#fff" stroke="#00f" stroke-width="1"/>
<rect x="675" y="160" width="1" height="37" fill="#00f"/>
<rect x="673.5" y="161.5" width="4" height="35" fill="#fff" stroke="#00f" stroke-width="1"/>
<rect x="682" y="160" width="1" height="20" fill="#00f"/>
<rect x="680.5" y="166.5" width="4" height="7" fill="#fff" stroke="#00f" stroke-width="1"/>
<rect x="689" y="146" width="1" height="18" fill="#00f"/>
<rect x="687.5" y="150.5" width="4" height="14" fill="#fff" stroke="#00f" stroke-width="1"/>
<rect x="696" y="141" width="1" height="32" fill="#00f"/>
<rect x="694" y="145" width="5" height="7" fill="#00f"/>
<rect x="703" y="139" width="1" height="19" fill="#00f"/>
<rect x="701" y="145" width="5" height="5" fill="#00f"/>
<rect x="710" y="150" width="1" height="20" fill="#00f"/>
<rect x="708" y="156" width="5" height="4" fill="#00f"/>
<rect x="718" y="173" width="1" height="14" fill="#00f"/>
<rect x="716" y="175" width="6" height="1" fill="#00f"/>
<rect x="725" y="148" width="1" height="26" fill="#00f"/>
<rect x="723.5" y="151.5" width="4" height="12" fill="#fff" stroke="#00f" stroke-width="1"/>
<rect x="732" y="115" width="1" height="31" fill="#00f"/>
<rect x="730.5" y="118.5" width="4" height="25" fill="#fff" stroke="#00f" stroke-width="1"/>
<rect x="738" y="102" width="1" height="13" fill="#00f"/>
<rect x="736" y="110" width="5" height="2" fill="#00f"/>
</g>
<path d="M143,196 L143,221 M136.7,207.5 L143,221 L149.3,207.5" stroke="#ff00ff" stroke-width="1" fill="none"/>
<path d="M213.25,197.5 L213.25,222.5 M206.95,207.5 L213.25,222.5 L219.55,207.5" stroke="#ff00ff" stroke-width="1" fill="none"/>
<path d="M220,193.75 L220,220 M213.7,207 L220,220 L226.3,207" stroke="#008080" stroke-width="1" fill="none"/>
<path d="M276.25,196 L276.25,221 M269.95,208 L276.25,221 L282.55,208" stroke="#008080" stroke-width="1" fill="none"/>
<path d="M339.25,195 L339.25,220 M332.95,207 L339.25,220 L345.55,207" stroke="#ff00ff" stroke-width="1" fill="none"/>
<path d="M486.1,193.9 L486.1,218.5 M479.6,205.0 L486.1,218.5 L492.6,205.0" stroke="#008080" stroke-width="1" fill="none"/>
<path d="M514.8,193.9 L514.8,218.5 M508.29999999999995,205.0 L514.8,218.5 L521.3,205.0" stroke="#008080" stroke-width="1" fill="none"/>
<path d="M520.3,193.9 L520.3,218.5 M513.8,205.0 L520.3,218.5 L526.8,205.0" stroke="#ff00ff" stroke-width="1" fill="none"/>
<path d="M577.3,98.4 L577.3,123 M571.0,109.7 L577.3,123 L583.5999999999999,109.7" stroke="#ff00ff" stroke-width="1" fill="none"/>
<path d="M668.4,98.4 L668.4,120.9 M662.1,106.9 L668.4,120.9 L674.6999999999999,106.9" stroke="#008080" stroke-width="1" fill="none"/>
<path d="M696.3,98.4 L696.3,121.6 M690.0,106.89999999999999 L696.3,121.6 L702.5999999999999,106.89999999999999" stroke="#008080" stroke-width="1" fill="none"/>
<path d="M703.3,98.4 L703.3,123 M696.8,109.7 L703.3,123 L709.8,109.7" stroke="#ff00ff" stroke-width="1" fill="none"/>
<path d="M724.4,99.1 L724.4,124.5 M717.9,110.5 L724.4,124.5 L730.9,110.5" stroke="#ff00ff" stroke-width="1" fill="none"/>
<path d="M80,259 L80,284.5 M71,263.5 L80,284.5 L89,263.5" stroke="#808080" stroke-width="2" fill="none"/>
<path d="M108,282.6 L108,307.2 M99.5,287.2 L108,307.2 L116.5,287.2" stroke="#808080" stroke-width="2" fill="none"/>
<path d="M129.1,270 L129.1,291.2 M119.8,272.2 L129.1,291.2 L138.4,272.2" stroke="#808080" stroke-width="2" fill="none"/>
<path d="M268.8,310.2 L268.8,334.7 M259.3,314.09999999999997 L268.8,334.7 L278.3,314.09999999999997" stroke="#808080" stroke-width="2" fill="none"/>
<path d="M289.4,321.8 L289.4,346.3 M279.9,326.3 L289.4,346.3 L298.9,326.3" stroke="#808080" stroke-width="2" fill="none"/>
<path d="M297,352.6 L297,375.2 M287.5,355.2 L297,375.2 L306.5,355.2" stroke="#808080" stroke-width="2" fill="none"/>
<path d="M527.5,221.6 L527.5,246.9 M518.0,226.9 L527.5,246.9 L537.0,226.9" stroke="#808080" stroke-width="2" fill="none"/>
<path d="M598.1,221.4 L598.1,246 M589.1,226 L598.1,246 L607.1,226" stroke="#808080" stroke-width="2" fill="none"/>
<path d="M647.1,130.1 L647.1,154.7 M637.6,134.29999999999998 L647.1,154.7 L656.6,134.29999999999998" stroke="#808080" stroke-width="2" fill="none"/>
<path d="M717,120.2 L717,144.8 M708,123.80000000000001 L717,144.8 L726,123.80000000000001" stroke="#808080" stroke-width="2" fill="none"/>
<path d="M87.3,293.2 L87.3,317.8 M81.0,304.5 L87.3,317.8 L93.6,304.5" stroke="#ff0000" stroke-width="1" fill="none"/>
<path d="M136.4,287.3 L136.4,309.8 M130.0,297.2 L136.4,309.8 L142.8,297.2" stroke="#ff0000" stroke-width="1" fill="none"/>
<path d="M143.1,295.9 L143.1,321.1 M136.1,308.5 L143.1,321.1 L150.1,308.5" stroke="#ff0000" stroke-width="1" fill="none"/>
<path d="M149.7,270 L149.7,292 M140.1,272 L149.7,292 L159.29999999999998,272" stroke="#ff0000" stroke-width="2" fill="none"/>
<path d="M206.4,340 L206.4,363.2 M200.1,351.2 L206.4,363.2 L212.70000000000002,351.2" stroke="#ff0000" stroke-width="1" fill="none"/>
<path d="M199.4,363.2 L199.4,387.8 M193.1,374.5 L199.4,387.8 L205.70000000000002,374.5" stroke="#ff0000" stroke-width="1" fill="none"/>
<path d="M213.1,378.5 L213.1,403 M204.4,383 L213.1,403 L221.79999999999998,383" stroke="#ff0000" stroke-width="2" fill="none"/>
<path d="M220.4,393.7 L220.4,420.3 M213.8,405.7 L220.4,420.3 L227.0,405.7" stroke="#ff0000" stroke-width="1" fill="none"/>
<path d="M227,380.5 L227,404.4 M220.7,391.09999999999997 L227,404.4 L233.3,391.09999999999997" stroke="#ff0000" stroke-width="1" fill="none"/>
<path d="M234.3,369.8 L234.3,393.7 M227.70000000000002,380.4 L234.3,393.7 L240.9,380.4" stroke="#ff0000" stroke-width="1" fill="none"/>
<path d="M269.5,343.3 L269.5,367.2 M262.9,353.9 L269.5,367.2 L276.1,353.9" stroke="#ff0000" stroke-width="1" fill="none"/>
<path d="M290.1,338 L290.1,361.9 M280.8,341.29999999999995 L290.1,361.9 L299.40000000000003,341.29999999999995" stroke="#ff0000" stroke-width="2" fill="none"/>
<path d="M324.6,409.7 L324.6,434.9 M315.0,414.29999999999995 L324.6,434.9 L334.20000000000005,414.29999999999995" stroke="#ff0000" stroke-width="2" fill="none"/>
<path d="M661.1,149.1 L661.1,174.4 M651.6,154.0 L661.1,174.4 L670.6,154.0" stroke="#ff0000" stroke-width="2" fill="none"/>
<path d="M717.4,146.3 L717.4,161 M711.4,147 L717.4,161 L723.4,147" stroke="#ff0000" stroke-width="1" fill="none"/>
<path d="M101.2,379.6 L101.2,348.4 M91.9,368.4 L101.2,348.4 L110.5,368.4" stroke="#00ff00" stroke-width="2" fill="none"/>
<path d="M121.8,380 L121.8,348.4 M112.5,368.4 L121.8,348.4 L131.1,368.4" stroke="#00ff00" stroke-width="2" fill="none"/>
<path d="M199.8,478.5 L199.8,446 M193.3,460.6 L199.8,446 L206.3,460.6" stroke="#00ff00" stroke-width="1.5" fill="none"/>
<path d="M233.9,515.7 L233.9,483.2 M224.6,504.4 L233.9,483.2 L243.20000000000002,504.4" stroke="#00ff00" stroke-width="2" fill="none"/>
<path d="M276.2,452.2 L276.2,420.3 M266.9,441.5 L276.2,420.3 L285.5,441.5" stroke="#00ff00" stroke-width="2" fill="none"/>
<path d="M353.3,552.7 L353.3,520.5 M343.5,541.1 L353.3,520.5 L363.1,541.1" stroke="#00ff00" stroke-width="2" fill="none"/>
<path d="M534.5,381.2 L534.5,348.4 M525.2,368.9 L534.5,348.4 L543.8,368.9" stroke="#00ff00" stroke-width="2" fill="none"/>
<path d="M605.2,283.3 L605.2,251.6 M595.7,272.7 L605.2,251.6 L614.7,272.7" stroke="#00ff00" stroke-width="2" fill="none"/>
<path d="M675.2,238 L675.2,206 M665.9000000000001,227.5 L675.2,206 L684.5,227.5" stroke="#00ff00" stroke-width="2" fill="none"/>
<path d="M724,224.3 L724,192.7 M714.7,213.0 L724,192.7 L733.3,213.0" stroke="#00ff00" stroke-width="2" fill="none"/>
<path d="M94,400 L94,373.6 M84.7,394.20000000000005 L94,373.6 L103.3,394.20000000000005" stroke="#808080" stroke-width="2" fill="none"/>
<path d="M192.2,497.8 L192.2,465.2 M183.7,485.2 L192.2,465.2 L200.7,485.2" stroke="#808080" stroke-width="2" fill="none"/>
<path d="M199.1,520.3 L199.1,488.5 M189.79999999999998,509.0 L199.1,488.5 L208.4,509.0" stroke="#808080" stroke-width="2" fill="none"/>
<path d="M220,531 L220,499.1 M210.6,519.7 L220,499.1 L229.4,519.7" stroke="#808080" stroke-width="2" fill="none"/>
<path d="M297.4,480.5 L297.4,448 M291.4,462.6 L297.4,448 L303.4,462.6" stroke="#808080" stroke-width="1.5" fill="none"/>
<path d="M318,527.6 L318,496.4 M308.7,516.4 L318,496.4 L327.3,516.4" stroke="#808080" stroke-width="2" fill="none"/>
<path d="M346.1,578.5 L346.1,546.3 M336.3,566.9 L346.1,546.3 L355.90000000000003,566.9" stroke="#808080" stroke-width="2" fill="none"/>
<path d="M667.7,255.9 L667.7,226.3 M658.7,246.0 L667.7,226.3 L676.7,246.0" stroke="#808080" stroke-width="2" fill="none"/>
<path d="M500,749 L500,729 M493.5,741 L500,729 L506.5,741" stroke="#808080" stroke-width="1" fill="none"/>
<path d="M535,749 L535,721 M528.5,733 L535,721 L541.5,733" stroke="#808080" stroke-width="1" fill="none"/>
<path d="M648,749 L648,724.6 M641.5,736.6 L648,724.6 L654.5,736.6" stroke="#808080" stroke-width="1" fill="none"/>
<path d="M710,749 L710,727 M703.5,739 L710,727 L716.5,739" stroke="#808080" stroke-width="1" fill="none"/>
<path d="M850.5,749 L850.5,727 M844.0,739 L850.5,727 L857.0,739" stroke="#808080" stroke-width="1" fill="none"/>
<path d="M962.5,749 L962.5,723 M956.0,735 L962.5,723 L969.0,735" stroke="#808080" stroke-width="1" fill="none"/>
</g>
<polyline points="81.3,813.7 86.6,816.4 118.5,816.4 139.7,821.7 384.1,821.7 389.4,823.8 415.9,821.7 426.6,820.4 453.1,812.4 479.7,805.2 506.2,799.1 532.8,795.7 559.4,793.0 585.9,789.3 617.8,784.5 647.0,783.2 665.6,785.9 692.2,792.5 740.0,799.1" fill="none" stroke="#000" stroke-width="1" stroke-linejoin="round" />
<polyline points="81.3,879.6 113.2,874.8 150.4,872.7 171.6,872.7 195.5,877.5 248.6,887.6 256.6,886.8 301.8,880.1 309.7,880.1 328.3,882.8 357.5,888.1 368.1,888.1 378.8,886.0 740.0,886.0" fill="none" stroke="#000" stroke-width="1" stroke-linejoin="round" />
<g shape-rendering="crispEdges">
<rect x="80" y="844" width="1" height="7" fill="#0000ff"/>
<rect x="87" y="848" width="1" height="3" fill="#0000ff"/>
<rect x="94" y="851" width="1" height="1" fill="#0000ff"/>
<rect x="101" y="851" width="1" height="5" fill="#0000ff"/>
<rect x="108" y="851" width="1" height="7" fill="#0000ff"/>
<rect x="115" y="851" width="1" height="6" fill="#0000ff"/>
<rect x="122" y="850" width="1" height="1" fill="#0000ff"/>
<rect x="129" y="848" width="1" height="3" fill="#0000ff"/>
<rect x="136" y="849" width="1" height="2" fill="#0000ff"/>
<rect x="143" y="850" width="1" height="1" fill="#0000ff"/>
<rect x="150" y="851" width="1" height="1" fill="#0000ff"/>
<rect x="157" y="851" width="1" height="12" fill="#0000ff"/>
<rect x="164" y="851" width="1" height="21" fill="#0000ff"/>
<rect x="171" y="851" width="1" height="31" fill="#0000ff"/>
<rect x="178" y="851" width="1" height="40" fill="#0000ff"/>
<rect x="185" y="851" width="1" height="52" fill="#0000ff"/>
<rect x="192" y="851" width="1" height="54" fill="#0000ff"/>
<rect x="199" y="851" width="1" height="55" fill="#0000ff"/>
<rect x="206" y="851" width="1" height="57" fill="#0000ff"/>
<rect x="213" y="851" width="1" height="57" fill="#0000ff"/>
<rect x="220" y="851" width="1" height="58" fill="#0000ff"/>
<rect x="227" y="851" width="1" height="58" fill="#0000ff"/>
<rect x="234" y="851" width="1" height="59" fill="#0000ff"/>
<rect x="241" y="851" width="1" height="56" fill="#0000ff"/>
<rect x="248" y="851" width="1" height="45" fill="#0000ff"/>
<rect x="255" y="851" width="1" height="35" fill="#0000ff"/>
<rect x="262" y="851" width="1" height="25" fill="#0000ff"/>
<rect x="269" y="851" width="1" height="18" fill="#0000ff"/>
<rect x="276" y="851" width="1" height="14" fill="#0000ff"/>
<rect x="283" y="851" width="1" height="13" fill="#0000ff"/>
<rect x="290" y="851" width="1" height="13" fill="#0000ff"/>
<rect x="297" y="851" width="1" height="15" fill="#0000ff"/>
<rect x="304" y="851" width="1" height="20" fill="#0000ff"/>
<rect x="311" y="851" width="1" height="28" fill="#0000ff"/>
<rect x="318" y="851" width="1" height="36" fill="#0000ff"/>
<rect x="325" y="851" width="1" height="44" fill="#0000ff"/>
<rect x="332" y="851" width="1" height="53" fill="#0000ff"/>
<rect x="339" y="851" width="1" height="58" fill="#0000ff"/>
<rect x="346" y="851" width="1" height="60" fill="#0000ff"/>
<rect x="353" y="851" width="1" height="61" fill="#0000ff"/>
<rect x="360" y="851" width="1" height="58" fill="#0000ff"/>
<rect x="367" y="851" width="1" height="44" fill="#0000ff"/>
<rect x="374" y="851" width="1" height="24" fill="#0000ff"/>
<rect x="381" y="851" width="1" height="5" fill="#0000ff"/>
<rect x="388" y="837" width="1" height="14" fill="#0000ff"/>
<rect x="395" y="824" width="1" height="27" fill="#0000ff"/>
<rect x="402" y="817" width="1" height="34" fill="#0000ff"/>
<rect x="409" y="815" width="1" height="36" fill="#0000ff"/>
<rect x="416" y="812" width="1" height="39" fill="#0000ff"/>
<rect x="423" y="805" width="1" height="46" fill="#0000ff"/>
<rect x="430" y="796" width="1" height="55" fill="#0000ff"/>
<rect x="437" y="788" width="1" height="63" fill="#0000ff"/>
<rect x="444" y="779" width="1" height="72" fill="#0000ff"/>
<rect x="451" y="772" width="1" height="79" fill="#0000ff"/>
<rect x="458" y="771" width="1" height="80" fill="#0000ff"/>
<rect x="465" y="771" width="1" height="80" fill="#0000ff"/>
<rect x="472" y="770" width="1" height="81" fill="#0000ff"/>
<rect x="479" y="769" width="1" height="82" fill="#0000ff"/>
<rect x="486" y="769" width="1" height="82" fill="#0000ff"/>
<rect x="493" y="770" width="1" height="81" fill="#0000ff"/>
<rect x="500" y="773" width="1" height="78" fill="#0000ff"/>
<rect x="507" y="774" width="1" height="77" fill="#0000ff"/>
<rect x="514" y="776" width="1" height="75" fill="#0000ff"/>
<rect x="521" y="777" width="1" height="74" fill="#0000ff"/>
<rect x="528" y="780" width="1" height="71" fill="#0000ff"/>
<rect x="535" y="781" width="1" height="70" fill="#0000ff"/>
<rect x="542" y="783" width="1" height="68" fill="#0000ff"/>
<rect x="549" y="783" width="1" height="68" fill="#0000ff"/>
<rect x="556" y="783" width="1" height="68" fill="#0000ff"/>
<rect x="563" y="779" width="1" height="72" fill="#0000ff"/>
<rect x="570" y="773" width="1" height="78" fill="#0000ff"/>
<rect x="577" y="769" width="1" height="82" fill="#0000ff"/>
<rect x="584" y="766" width="1" height="85" fill="#0000ff"/>
<rect x="591" y="762" width="1" height="89" fill="#0000ff"/>
<rect x="598" y="764" width="1" height="87" fill="#0000ff"/>
<rect x="605" y="769" width="1" height="82" fill="#0000ff"/>
<rect x="612" y="771" width="1" height="80" fill="#0000ff"/>
<rect x="619" y="773" width="1" height="78" fill="#0000ff"/>
<rect x="626" y="777" width="1" height="74" fill="#0000ff"/>
<rect x="633" y="778" width="1" height="73" fill="#0000ff"/>
<rect x="640" y="779" width="1" height="72" fill="#0000ff"/>
<rect x="647" y="785" width="1" height="66" fill="#0000ff"/>
<rect x="654" y="794" width="1" height="57" fill="#0000ff"/>
<rect x="661" y="803" width="1" height="48" fill="#0000ff"/>
<rect x="668" y="813" width="1" height="38" fill="#0000ff"/>
<rect x="675" y="819" width="1" height="32" fill="#0000ff"/>
<rect x="682" y="822" width="1" height="29" fill="#0000ff"/>
<rect x="689" y="820" width="1" height="31" fill="#0000ff"/>
<rect x="696" y="817" width="1" height="34" fill="#0000ff"/>
<rect x="703" y="813" width="1" height="38" fill="#0000ff"/>
<rect x="710" y="813" width="1" height="38" fill="#0000ff"/>
<rect x="717" y="817" width="1" height="34" fill="#0000ff"/>
<rect x="724" y="820" width="1" height="31" fill="#0000ff"/>
<rect x="731" y="819" width="1" height="32" fill="#0000ff"/>
<rect x="738" y="816" width="1" height="35" fill="#0000ff"/>
</g>
<path d="M107.9,797.8 L107.9,828.4 M98.60000000000001,808.4 L107.9,828.4 L117.2,808.4" stroke="#f00" stroke-width="2" fill="none"/>
<path d="M303.9,802.3 L303.9,833.7 M294.29999999999995,813.2 L303.9,833.7 L313.5,813.2" stroke="#f00" stroke-width="2" fill="none"/>
<path d="M647,754 L647,771.2 M639,755.2 L647,771.2 L655,755.2" stroke="#f00" stroke-width="2" fill="none"/>
<path d="M255.3,920 L255.3,894.8 M246.0,915.1999999999999 L255.3,894.8 L264.6,915.1999999999999" stroke="#0f0" stroke-width="2.5" fill="none"/>
<path d="M374,920 L374,894.8 M364.7,915.1999999999999 L374,894.8 L383.3,915.1999999999999" stroke="#0f0" stroke-width="2.5" fill="none"/>
<text x="78" y="768" font-family="Liberation Sans" font-size="13" font-weight="bold" fill="#000" text-anchor="start">Osc 5,35</text>
<text x="388" y="908" font-family="Liberation Sans" font-size="13" font-weight="bold" fill="#000" text-anchor="start">Osc BUY Signal</text></svg>
<div class="a" style="left:1250px;top:78px;width:1px;height:488px;background:#ffffff;"></div>
<div class="a" style="left:1251px;top:566px;width:29px;height:1px;background:#808080;"></div>
<div class="a" style="left:1251px;top:567px;width:29px;height:1px;background:#ffffff;"></div>
<div class="btn pressed" style="left:1254px;top:88px;width:23px;height:21px;"><svg width="22" height="20" style="position:absolute;left:-1px;top:-1px"><path d="M5,4 L17,16 M17,4 L5,16" stroke="#000" stroke-width="2"/></svg></div>
<div class="btn" style="left:1254px;top:110px;width:23px;height:21px;"><svg width="22" height="20" style="position:absolute;left:-1px;top:-1px"><path d="M6,5 L16,15" stroke="#000" stroke-width="5"/><path d="M6,5 L16,15" stroke="#ffff00" stroke-width="2.6"/><circle cx="16.5" cy="15.5" r="1.8" fill="#a00000"/></svg></div>
<div class="btn" style="left:1254px;top:132px;width:23px;height:21px;"><svg width="22" height="20" style="position:absolute;left:-1px;top:-1px"><path d="M4,13 L18,6" stroke="#0000ff"/><path d="M4,15 L18,8" stroke="#000"/><path d="M4,17 L18,10" stroke="#ff0000"/></svg></div>
<div class="btn" style="left:1254px;top:154px;width:23px;height:21px;"><svg width="22" height="20" style="position:absolute;left:-1px;top:-1px"><text x="11" y="10" text-anchor="middle" font-family="Liberation Sans" font-size="8.5" fill="#000">FIB</text><text x="11" y="18" text-anchor="middle" font-family="Liberation Sans" font-size="8.5" fill="#000">RET</text></svg></div>
<div class="btn" style="left:1254px;top:176px;width:23px;height:21px;"><svg width="22" height="20" style="position:absolute;left:-1px;top:-1px"><text x="11" y="10" text-anchor="middle" font-family="Liberation Sans" font-size="8.5" fill="#000">FIB</text><text x="11" y="18" text-anchor="middle" font-family="Liberation Sans" font-size="8.5" fill="#000">EXT</text></svg></div>
<div class="btn" style="left:1254px;top:198px;width:23px;height:21px;"><svg width="22" height="20" style="position:absolute;left:-1px;top:-1px"><text x="11" y="10" text-anchor="middle" font-family="Liberation Sans" font-size="8.5" fill="#000">FIB</text><text x="11" y="18" text-anchor="middle" font-family="Liberation Sans" font-size="8" fill="#000">TIME</text></svg></div>
<div class="btn" style="left:1254px;top:220px;width:23px;height:21px;"><svg width="22" height="20" style="position:absolute;left:-1px;top:-1px"><path d="M4,14 A7,7 0 0 1 18,14" fill="none" stroke="#ff0000" stroke-width="1.3"/><path d="M6.5,14 A4.5,4.5 0 0 1 15.5,14" fill="none" stroke="#0000ff" stroke-width="1.2"/><text x="11" y="18.5" text-anchor="middle" font-family="Liberation Sans" font-size="8" fill="#000">FIB</text></svg></div>
<div class="btn" style="left:1254px;top:242px;width:23px;height:21px;"><svg width="22" height="20" style="position:absolute;left:-1px;top:-1px"><path d="M3,11 L18,4 M3,11 L18,9 M3,11 L18,14 M3,11 L18,17" stroke="#0000ff"/><path d="M3,11 L18,7 M3,11 L17,15" stroke="#ff0000"/><path d="M3,11 L12,18" stroke="#008000"/><path d="M3,11 L18,11" stroke="#000"/></svg></div>
<div class="btn" style="left:1254px;top:264px;width:23px;height:21px;"><svg width="22" height="20" style="position:absolute;left:-1px;top:-1px"><rect x="5" y="4" width="12" height="12" fill="#fff" stroke="#000"/><path d="M8,4v12M11,4v12M14,4v12M5,7h12M5,10h12M5,13h12" stroke="#808080" stroke-width="0.8"/></svg></div>
<div class="btn" style="left:1254px;top:286px;width:23px;height:21px;"><svg width="22" height="20" style="position:absolute;left:-1px;top:-1px"><ellipse cx="11" cy="8" rx="7" ry="4.5" fill="#00ffff" stroke="#ff0000" stroke-width="1.2"/><text x="11" y="18.5" text-anchor="middle" font-family="Liberation Sans" font-size="6.5" font-weight="bold" fill="#000">ELIPS</text></svg></div>
<div class="btn" style="left:1254px;top:308px;width:23px;height:21px;"><svg width="22" height="20" style="position:absolute;left:-1px;top:-1px"><path d="M4,5 L18,17" stroke="#0000ff"/><path d="M6,15 L16,6" stroke="#ff0000"/><path d="M8,16 L17,9" stroke="#008000"/><path d="M5,13 L13,5" stroke="#000080"/></svg></div>
<div class="btn" style="left:1254px;top:330px;width:23px;height:21px;"><svg width="22" height="20" style="position:absolute;left:-1px;top:-1px"><text x="11" y="15" text-anchor="middle" font-family="Liberation Sans" font-size="11" font-weight="bold" fill="#000">PTI</text></svg></div>
<div class="btn" style="left:1254px;top:352px;width:23px;height:21px;"><svg width="22" height="20" style="position:absolute;left:-1px;top:-1px"><rect x="5" y="4" width="12" height="12" fill="#fff" stroke="#0000ff" stroke-width="1.3"/><path d="M9,4v12M13,4v12M5,8h12M5,12h12" stroke="#0000ff" stroke-width="1.3"/></svg></div>
<div class="btn" style="left:1254px;top:374px;width:23px;height:21px;"><svg width="22" height="20" style="position:absolute;left:-1px;top:-1px"><rect x="4" y="3" width="14" height="2.5" fill="#ff00ff"/><rect x="4" y="6" width="14" height="2.5" fill="#00ffff"/><text x="11" y="17.5" text-anchor="middle" font-family="Liberation Sans" font-size="8" fill="#000">MOB</text></svg></div>
<div class="btn" style="left:1254px;top:396px;width:23px;height:21px;"><svg width="22" height="20" style="position:absolute;left:-1px;top:-1px"><circle cx="12.5" cy="8.5" r="5" fill="#fff" stroke="#000"/><text x="12.5" y="12" text-anchor="middle" font-family="Liberation Sans" font-size="9" font-weight="bold" fill="#008000">1</text><path d="M9,12 L4,17" stroke="#000" stroke-width="1.5" stroke-dasharray="1.5,1"/></svg></div>
<div class="btn" style="left:1254px;top:418px;width:23px;height:21px;"><svg width="22" height="20" style="position:absolute;left:-1px;top:-1px"><text x="11" y="17" text-anchor="middle" font-family="Liberation Serif" font-size="17" font-weight="bold" fill="#000">A</text></svg></div>
<div class="btn" style="left:1254px;top:440px;width:23px;height:21px;"><svg width="22" height="20" style="position:absolute;left:-1px;top:-1px"><circle cx="9.5" cy="8.5" r="5" fill="#fff" stroke="#000" stroke-width="1.3"/><path d="M7,8.5h5M9.5,6v5" stroke="#000"/><path d="M13,12 L18,17" stroke="#000" stroke-width="2.2"/></svg></div>
<div class="btn" style="left:1254px;top:467px;width:23px;height:22px;"><svg width="22" height="20" style="position:absolute;left:-1px;top:-1px"><path d="M5,6 L17,16" stroke="#000" stroke-width="6.5"/><path d="M5.5,6.5 L11,11" stroke="#b00000" stroke-width="4.5"/><path d="M11,11 L16.5,15.5" stroke="#ffff00" stroke-width="4.5"/></svg></div>
<div class="btn" style="left:1254px;top:489px;width:23px;height:22px;"><svg width="22" height="20" style="position:absolute;left:-1px;top:-1px"><rect x="4" y="3" width="14" height="14" fill="#fff" stroke="#000" stroke-dasharray="1.5,1"/><path d="M6,5 L16,15 M16,5 L6,15" stroke="#000"/><path d="M6,5h3M6,5v3M16,5h-3M16,5v3M6,15h3M6,15v-3M16,15h-3M16,15v-3" stroke="#000"/></svg></div>
<div class="btn" style="left:1254px;top:511px;width:23px;height:22px;"><svg width="22" height="20" style="position:absolute;left:-1px;top:-1px"><path d="M4,4 h9 v11 h-9 z" fill="#fff" stroke="#000"/><path d="M8,7 h10 v11 h-10 z" fill="#fff" stroke="#000"/><path d="M10,10h6M10,12h6M10,14h6M10,16h6" stroke="#000" stroke-width="0.8"/></svg></div>
<div class="btn pressed" style="left:1254px;top:538px;width:23px;height:22px;"><svg width="22" height="20" style="position:absolute;left:-1px;top:-1px"><path d="M6,4 v8 a5,5 0 0 0 10,0 v-8" fill="none" stroke="#ff0000" stroke-width="3.5"/></svg></div></body></html>
